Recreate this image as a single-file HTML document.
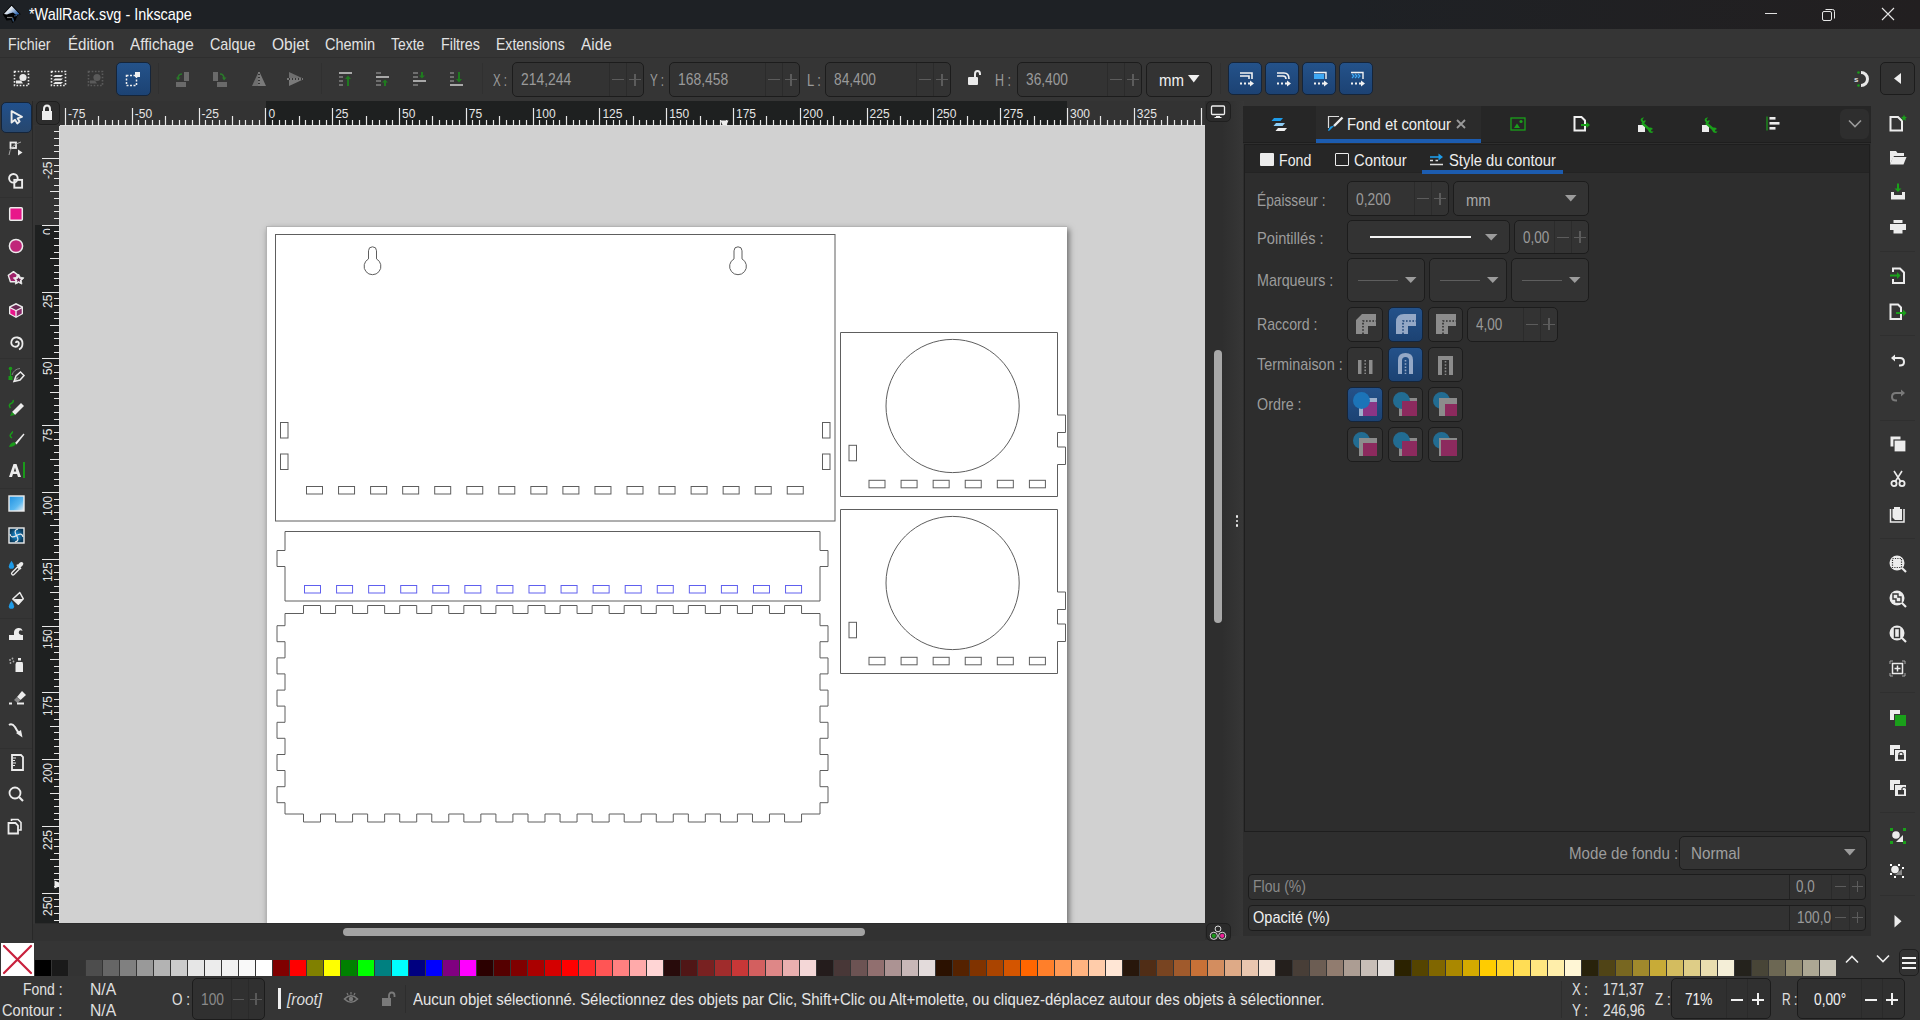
<!DOCTYPE html>
<html><head><meta charset="utf-8">
<style>
*{margin:0;padding:0;box-sizing:border-box}
html,body{width:1920px;height:1020px;overflow:hidden;background:#353535;font-family:"Liberation Sans",sans-serif;color:#e6e6e6;position:relative}
.a{position:absolute}
.t{position:absolute;white-space:nowrap;line-height:1}
.fld{position:absolute;border:1px solid #1c1c1c;border-radius:5px;background:#333}
.btnb{position:absolute;border:1px solid #15253a;border-radius:5px;background:linear-gradient(#24528a,#1c4273)}
</style></head><body>

<div class="a" style="left:0px;top:0px;width:1920px;height:29px;background:linear-gradient(90deg,#1e2125 0%,#1e2125 70%,#221f20 100%);"></div>
<svg class="a" style="left:0px;top:1px;" width="22" height="22" viewBox="0 0 22 22"><defs><linearGradient id="lgo" x1="0" y1="0" x2="1" y2="0.6"><stop offset="0.25" stop-color="#ffffff"/><stop offset="0.55" stop-color="#c8d4e4"/><stop offset="1" stop-color="#3a70b8"/></linearGradient></defs><path d="M11.6 3.5 L20.8 13.2 L17.5 14.5 L15.5 19.5 L12.5 22 L11 19 L6.5 19.5 L5 17 L2.8 13.3 Z" fill="#000"/><path d="M11.6 4.8 L19.6 13.2 L16 13.8 L13 11.5 L9.5 12.5 L7 13.5 L4 13 Z" fill="url(#lgo)"/><path d="M7 16.5 H12.5" stroke="#777" stroke-width="1.2"/><path d="M12.5 17 L13.5 20.5" stroke="#3a5a80" stroke-width="1.3"/><path d="M14 15 L17 14.5" stroke="#3a5a80" stroke-width="1"/></svg>
<div class="t" style="left:29.00px;top:7.21px;font-size:15.7px;color:#ffffff;transform:scaleX(0.9188);transform-origin:0 0;">*WallRack.svg - Inkscape</div>
<div class="a" style="left:1765px;top:13px;width:12px;height:1px;background:#e0e0e0;"></div>
<svg class="a" style="left:1821px;top:7px;" width="16" height="15" viewBox="0 0 16 15"><rect x="1.5" y="4.5" width="9" height="9" rx="1.5" fill="none" stroke="#e6e6e6" stroke-width="1"/><path d="M4.5 2.5 H11.5 Q13.5 2.5 13.5 4.5 V11.5" fill="none" stroke="#e6e6e6" stroke-width="1"/></svg>
<svg class="a" style="left:1881px;top:7px;" width="14" height="14" viewBox="0 0 14 14"><path d="M1 1 L13 13 M13 1 L1 13" stroke="#e6e6e6" stroke-width="1.1"/></svg>
<div class="a" style="left:0px;top:29px;width:1920px;height:28px;background:#353535;"></div>
<div class="a" style="left:0px;top:57px;width:1920px;height:1px;background:#2e2e2e;"></div>
<div class="t" style="left:8.30px;top:37.21px;font-size:15.7px;color:#e3e3e3;transform:scaleX(0.9022);transform-origin:0 0;">Fichier</div>
<div class="t" style="left:67.50px;top:37.21px;font-size:15.7px;color:#e3e3e3;transform:scaleX(0.9624);transform-origin:0 0;">Édition</div>
<div class="t" style="left:130.00px;top:37.21px;font-size:15.7px;color:#e3e3e3;transform:scaleX(0.9774);transform-origin:0 0;">Affichage</div>
<div class="t" style="left:210.00px;top:37.21px;font-size:15.7px;color:#e3e3e3;transform:scaleX(0.9146);transform-origin:0 0;">Calque</div>
<div class="t" style="left:272.00px;top:37.21px;font-size:15.7px;color:#e3e3e3;transform:scaleX(0.9914);transform-origin:0 0;">Objet</div>
<div class="t" style="left:325.00px;top:37.21px;font-size:15.7px;color:#e3e3e3;transform:scaleX(0.9243);transform-origin:0 0;">Chemin</div>
<div class="t" style="left:391.00px;top:37.21px;font-size:15.7px;color:#e3e3e3;transform:scaleX(0.8875);transform-origin:0 0;">Texte</div>
<div class="t" style="left:441.00px;top:37.21px;font-size:15.7px;color:#e3e3e3;transform:scaleX(0.9126);transform-origin:0 0;">Filtres</div>
<div class="t" style="left:496.30px;top:37.21px;font-size:15.7px;color:#e3e3e3;transform:scaleX(0.8946);transform-origin:0 0;">Extensions</div>
<div class="t" style="left:581.00px;top:37.21px;font-size:15.7px;color:#e3e3e3;transform:scaleX(0.9770);transform-origin:0 0;">Aide</div>
<div class="a" style="left:0px;top:58px;width:1920px;height:43px;background:#353535;"></div>
<svg class="a" style="left:13px;top:70px;" width="18" height="18" viewBox="0 0 18 18"><rect x="1.5" y="1.5" width="14" height="14" fill="none" stroke="#e8e8e8" stroke-width="1.6" stroke-dasharray="1.6 1.6"/><circle cx="10" cy="7.5" r="3.6" fill="#e8e8e8"/><path d="M3 13.5 V10.5 H8 L10 13.5 Z" fill="#e8e8e8"/></svg>
<svg class="a" style="left:50px;top:70px;" width="18" height="18" viewBox="0 0 18 18"><rect x="1.5" y="1.5" width="14" height="14" fill="none" stroke="#e8e8e8" stroke-width="1.6" stroke-dasharray="1.6 1.6"/><path d="M5 5 H13 L11 7 H3 Z M5 8.5 H13 L11 10.5 H3 Z M5 12 H13 L11 14 H3 Z" fill="#e8e8e8"/></svg>
<svg class="a" style="left:87px;top:70px;" width="18" height="18" viewBox="0 0 18 18"><rect x="1.5" y="1.5" width="14" height="14" fill="none" stroke="#5a5a5a" stroke-width="1.6" stroke-dasharray="1.6 1.6"/><circle cx="10" cy="7.5" r="3.6" fill="#5a5a5a"/><path d="M3 13.5 V10.5 H8 L10 13.5 Z" fill="#5a5a5a"/></svg>
<div class="btnb" style="left:116px;top:62px;width:35px;height:34px"></div>
<svg class="a" style="left:125px;top:71px;" width="16" height="16" viewBox="0 0 16 16"><rect x="1.5" y="4.5" width="10" height="10" fill="none" stroke="#eee" stroke-width="1.5" stroke-dasharray="2 1.5"/><rect x="10" y="1" width="5" height="5" fill="#f0f0f0"/></svg>
<div class="a" style="left:158px;top:63px;width:1px;height:31px;background:#303030;"></div>
<svg class="a" style="left:175px;top:71px;" width="18" height="17" viewBox="0 0 18 17"><rect x="9" y="1" width="5" height="9" fill="#6a6a6a"/><rect x="1" y="11" width="10" height="5" fill="#6a6a6a"/><path d="M7 3 Q3 3 3 8" stroke="#2a7a2a" stroke-width="1.6" fill="none"/><path d="M1 6.5 L3 9.5 L5.5 6.5Z" fill="#2a7a2a"/></svg>
<svg class="a" style="left:212px;top:71px;" width="18" height="17" viewBox="0 0 18 17"><rect x="1" y="1" width="5" height="9" fill="#6a6a6a"/><rect x="5" y="11" width="10" height="5" fill="#6a6a6a"/><path d="M8 3 Q12 3 12 8" stroke="#2a7a2a" stroke-width="1.6" fill="none"/><path d="M10 6.5 L12 9.5 L14.5 6.5Z" fill="#2a7a2a"/></svg>
<svg class="a" style="left:251px;top:71px;" width="16" height="16" viewBox="0 0 16 16"><path d="M7 2 V15 H1 Z" fill="#6e6e6e"/><path d="M9 2 V15 H15 Z" fill="#7a7a7a"/><path d="M8 1 V16" stroke="#bbb" stroke-width="1" stroke-dasharray="2 1"/></svg>
<svg class="a" style="left:287px;top:71px;" width="16" height="16" viewBox="0 0 16 16"><path d="M2 1 L15 7 H2 Z" fill="#6e6e6e"/><path d="M2 9 H15 L2 15 Z" fill="#7a7a7a"/><path d="M0 8 H16" stroke="#bbb" stroke-width="1" stroke-dasharray="2 1"/></svg>
<div class="a" style="left:321px;top:63px;width:1px;height:31px;background:#303030;"></div>
<svg class="a" style="left:338px;top:71px;" width="16" height="16" viewBox="0 0 16 16"><rect x="1" y="1" width="13" height="2" fill="#a8a8a8"/><rect x="1" y="5" width="4" height="2" fill="#6e6e6e"/><rect x="1" y="9" width="4" height="2" fill="#6e6e6e"/><rect x="1" y="13" width="4" height="2" fill="#6e6e6e"/><path d="M10 15 V7" stroke="#1f7a1f" stroke-width="2"/><path d="M7 8 L10 4.5 L13 8Z" fill="#1f7a1f"/></svg>
<svg class="a" style="left:375px;top:71px;" width="16" height="16" viewBox="0 0 16 16"><rect x="1" y="1" width="5" height="2" fill="#6e6e6e"/><rect x="1" y="5" width="13" height="2" fill="#a8a8a8"/><rect x="1" y="9" width="5" height="2" fill="#6e6e6e"/><rect x="1" y="13" width="5" height="2" fill="#6e6e6e"/><path d="M10 15 V11" stroke="#1f7a1f" stroke-width="2"/><path d="M7 11.5 L10 8.5 L13 11.5Z" fill="#1f7a1f"/></svg>
<svg class="a" style="left:412px;top:71px;" width="16" height="16" viewBox="0 0 16 16"><rect x="1" y="1" width="5" height="2" fill="#6e6e6e"/><rect x="1" y="5" width="5" height="2" fill="#6e6e6e"/><rect x="1" y="9" width="13" height="2" fill="#a8a8a8"/><rect x="1" y="13" width="5" height="2" fill="#6e6e6e"/><path d="M10 1 V5" stroke="#1f7a1f" stroke-width="2"/><path d="M7 4.5 L10 7.5 L13 4.5Z" fill="#1f7a1f"/></svg>
<svg class="a" style="left:449px;top:71px;" width="16" height="16" viewBox="0 0 16 16"><rect x="1" y="1" width="4" height="2" fill="#6e6e6e"/><rect x="1" y="5" width="4" height="2" fill="#6e6e6e"/><rect x="1" y="9" width="4" height="2" fill="#6e6e6e"/><rect x="1" y="13" width="13" height="2" fill="#a8a8a8"/><path d="M10 1 V9" stroke="#1f7a1f" stroke-width="2"/><path d="M7 8 L10 11.5 L13 8Z" fill="#1f7a1f"/></svg>
<div class="a" style="left:482px;top:63px;width:1px;height:31px;background:#303030;"></div>
<div class="t" style="left:493.00px;top:72.71px;font-size:15.7px;color:#9a9a9a;transform:scaleX(0.7293);transform-origin:0 0;">X :</div>
<div class="fld" style="left:512px;top:62px;width:132px;height:35px"></div>
<div class="t" style="left:520.50px;top:72.21px;font-size:15.7px;color:#9a9a9a;transform:scaleX(0.8864);transform-origin:0 0;">214,244</div>
<div class="a" style="left:609px;top:63px;width:1px;height:33px;background:#2b2b2b;"></div>
<div class="a" style="left:626px;top:63px;width:1px;height:33px;background:#2b2b2b;"></div>
<div class="a" style="left:612px;top:79.0px;width:12px;height:1.3px;background:#5c5c5c;"></div>
<div class="a" style="left:629px;top:79.0px;width:12px;height:1.3px;background:#5c5c5c;"></div>
<div class="a" style="left:634.4px;top:73.5px;width:1.3px;height:12px;background:#5c5c5c;"></div>
<div class="t" style="left:650.00px;top:72.71px;font-size:15.7px;color:#9a9a9a;transform:scaleX(0.7403);transform-origin:0 0;">Y :</div>
<div class="fld" style="left:669px;top:62px;width:131px;height:35px"></div>
<div class="t" style="left:677.50px;top:72.21px;font-size:15.7px;color:#9a9a9a;transform:scaleX(0.8864);transform-origin:0 0;">168,458</div>
<div class="a" style="left:765px;top:63px;width:1px;height:33px;background:#2b2b2b;"></div>
<div class="a" style="left:782px;top:63px;width:1px;height:33px;background:#2b2b2b;"></div>
<div class="a" style="left:768px;top:79.0px;width:12px;height:1.3px;background:#5c5c5c;"></div>
<div class="a" style="left:785px;top:79.0px;width:12px;height:1.3px;background:#5c5c5c;"></div>
<div class="a" style="left:790.4px;top:73.5px;width:1.3px;height:12px;background:#5c5c5c;"></div>
<div class="t" style="left:807.00px;top:72.71px;font-size:15.7px;color:#9a9a9a;transform:scaleX(0.8297);transform-origin:0 0;">L :</div>
<div class="fld" style="left:825px;top:62px;width:126px;height:35px"></div>
<div class="t" style="left:833.50px;top:72.21px;font-size:15.7px;color:#9a9a9a;transform:scaleX(0.8747);transform-origin:0 0;">84,400</div>
<div class="a" style="left:916px;top:63px;width:1px;height:33px;background:#2b2b2b;"></div>
<div class="a" style="left:933px;top:63px;width:1px;height:33px;background:#2b2b2b;"></div>
<div class="a" style="left:919px;top:79.0px;width:12px;height:1.3px;background:#5c5c5c;"></div>
<div class="a" style="left:936px;top:79.0px;width:12px;height:1.3px;background:#5c5c5c;"></div>
<div class="a" style="left:941.4px;top:73.5px;width:1.3px;height:12px;background:#5c5c5c;"></div>
<svg class="a" style="left:966px;top:69px;" width="16" height="18" viewBox="0 0 16 18"><rect x="2" y="8" width="10" height="8" rx="1" fill="#eaeaea"/><path d="M9 8 V5 Q9 2 11.5 2 Q14 2 14 5 V6" stroke="#eaeaea" stroke-width="2" fill="none"/></svg>
<div class="t" style="left:995.00px;top:72.71px;font-size:15.7px;color:#9a9a9a;transform:scaleX(0.7975);transform-origin:0 0;">H :</div>
<div class="fld" style="left:1017px;top:62px;width:125px;height:35px"></div>
<div class="t" style="left:1025.50px;top:72.21px;font-size:15.7px;color:#9a9a9a;transform:scaleX(0.8747);transform-origin:0 0;">36,400</div>
<div class="a" style="left:1107px;top:63px;width:1px;height:33px;background:#2b2b2b;"></div>
<div class="a" style="left:1124px;top:63px;width:1px;height:33px;background:#2b2b2b;"></div>
<div class="a" style="left:1110px;top:79.0px;width:12px;height:1.3px;background:#5c5c5c;"></div>
<div class="a" style="left:1127px;top:79.0px;width:12px;height:1.3px;background:#5c5c5c;"></div>
<div class="a" style="left:1132.4px;top:73.5px;width:1.3px;height:12px;background:#5c5c5c;"></div>
<div class="fld" style="left:1146px;top:62px;width:66px;height:35px"></div>
<div class="t" style="left:1158.70px;top:73.21px;font-size:15.7px;color:#f0f0f0;transform:scaleX(0.9558);transform-origin:0 0;">mm</div>
<svg class="a" style="left:1188px;top:75px;" width="12" height="8" viewBox="0 0 12 8"><path d="M0 0 H11.5 L5.75 7.5Z" fill="#f0f0f0"/></svg>
<div class="a" style="left:1220px;top:63px;width:1px;height:31px;background:#303030;"></div>
<div class="btnb" style="left:1228px;top:62px;width:34px;height:33px"></div>
<svg class="a" style="left:1239px;top:71px;" width="16" height="17" viewBox="0 0 16 17"><path d="M1 2 H13 V8 M1 5 H10 V8" stroke="#f2f2f2" stroke-width="1.6" fill="none"/><path d="M1 12.5 H3 M5 12.5 H7 M9 12.5 H12" stroke="#f2f2f2" stroke-width="2"/><path d="M11 9.5 L15 12.5 L11 15.5Z" fill="#f2f2f2"/></svg>
<div class="btnb" style="left:1265px;top:62px;width:34px;height:33px"></div>
<svg class="a" style="left:1276px;top:71px;" width="16" height="17" viewBox="0 0 16 17"><path d="M1 2 H8 Q13 2 13 8 M1 5 H7 Q10 5 10 8" stroke="#f2f2f2" stroke-width="1.6" fill="none"/><path d="M1 12.5 H3 M5 12.5 H7 M9 12.5 H12" stroke="#f2f2f2" stroke-width="2"/><path d="M11 9.5 L15 12.5 L11 15.5Z" fill="#f2f2f2"/></svg>
<div class="btnb" style="left:1302px;top:62px;width:34px;height:33px"></div>
<svg class="a" style="left:1313px;top:71px;" width="16" height="17" viewBox="0 0 16 17"><rect x="1" y="3" width="10" height="5" fill="#3fa9f5"/><path d="M1 1.5 H13 V8" stroke="#f2f2f2" stroke-width="1.4" fill="none"/><path d="M1 12.5 H3 M5 12.5 H7 M9 12.5 H12" stroke="#f2f2f2" stroke-width="2"/><path d="M11 9.5 L15 12.5 L11 15.5Z" fill="#f2f2f2"/></svg>
<div class="btnb" style="left:1339px;top:62px;width:34px;height:33px"></div>
<svg class="a" style="left:1350px;top:71px;" width="16" height="17" viewBox="0 0 16 17"><path d="M2 3 L4 5 L2 7 M5 3 L7 5 L5 7 M8 3 L10 5 L8 7" stroke="#3fa9f5" stroke-width="1.2" fill="none"/><path d="M1 1.5 H13 V8" stroke="#f2f2f2" stroke-width="1.4" fill="none"/><path d="M1 12.5 H3 M5 12.5 H7 M9 12.5 H12" stroke="#f2f2f2" stroke-width="2"/><path d="M11 9.5 L15 12.5 L11 15.5Z" fill="#f2f2f2"/></svg>
<svg class="a" style="left:1851px;top:70px;" width="20" height="18" viewBox="0 0 20 18"><path d="M10 2.5 A6.5 6.5 0 0 1 10 15.5" stroke="#e8e8e8" stroke-width="3" fill="none"/><circle cx="7.5" cy="2.5" r="1.3" fill="#1a9e1a"/><circle cx="7.5" cy="15.5" r="1.3" fill="#1a9e1a"/><text x="3" y="12" font-size="8" fill="#ddd" font-family="Liberation Sans" font-weight="bold">s</text></svg>
<div class="fld" style="left:1880px;top:62px;width:35px;height:33px;background:#323232"></div>
<svg class="a" style="left:1894px;top:73px;" width="8" height="12" viewBox="0 0 8 12"><path d="M7 0 V11 L0 5.5Z" fill="#eee"/></svg>
<div class="a" style="left:0px;top:101px;width:32px;height:839px;background:#353535;"></div>
<div class="a" style="left:32px;top:101px;width:1px;height:839px;background:#282828;"></div>
<div class="a" style="left:33px;top:101px;width:1172px;height:24px;background:#333333;"></div>
<div class="a" style="left:265.9px;top:101px;width:801.6px;height:24px;background:#1e2020;"></div>
<div class="a" style="left:60px;top:125px;width:1145px;height:1px;background:#dcdcdc;"></div>
<div class="a" style="left:36px;top:101px;width:24px;height:24px;border:1px solid #1f1f1f;border-radius:5px;background:#2d2d2d"></div>
<svg class="a" style="left:41px;top:104px;" width="12" height="17" viewBox="0 0 12 17"><rect x="1" y="7" width="10" height="9" fill="#ededed"/><path d="M3 7.5 V5 Q3 1.5 6 1.5 Q9 1.5 9 5 V7.5" stroke="#ededed" stroke-width="2" fill="none"/></svg>
<svg class="a" style="left:60px;top:101px;" width="1145" height="25" viewBox="0 0 1145 25"><path d="M5.5 7 V125 M12.5 19 V125 M18.5 19 V125 M25.5 19 V125 M32.5 19 V125 M38.5 15 V125 M45.5 19 V125 M52.5 19 V125 M58.5 19 V125 M65.5 19 V125 M72.5 7 V125 M78.5 19 V125 M85.5 19 V125 M92.5 19 V125 M99.5 19 V125 M105.5 15 V125 M112.5 19 V125 M119.5 19 V125 M125.5 19 V125 M132.5 19 V125 M139.5 7 V125 M145.5 19 V125 M152.5 19 V125 M159.5 19 V125 M165.5 19 V125 M172.5 15 V125 M179.5 19 V125 M185.5 19 V125 M192.5 19 V125 M199.5 19 V125 M205.5 7 V125 M212.5 19 V125 M219.5 19 V125 M225.5 19 V125 M232.5 19 V125 M239.5 15 V125 M245.5 19 V125 M252.5 19 V125 M259.5 19 V125 M266.5 19 V125 M272.5 7 V125 M279.5 19 V125 M286.5 19 V125 M292.5 19 V125 M299.5 19 V125 M306.5 15 V125 M312.5 19 V125 M319.5 19 V125 M326.5 19 V125 M332.5 19 V125 M339.5 7 V125 M346.5 19 V125 M352.5 19 V125 M359.5 19 V125 M366.5 19 V125 M372.5 15 V125 M379.5 19 V125 M386.5 19 V125 M392.5 19 V125 M399.5 19 V125 M406.5 7 V125 M412.5 19 V125 M419.5 19 V125 M426.5 19 V125 M433.5 19 V125 M439.5 15 V125 M446.5 19 V125 M453.5 19 V125 M459.5 19 V125 M466.5 19 V125 M473.5 7 V125 M479.5 19 V125 M486.5 19 V125 M493.5 19 V125 M499.5 19 V125 M506.5 15 V125 M513.5 19 V125 M519.5 19 V125 M526.5 19 V125 M533.5 19 V125 M539.5 7 V125 M546.5 19 V125 M553.5 19 V125 M559.5 19 V125 M566.5 19 V125 M573.5 15 V125 M579.5 19 V125 M586.5 19 V125 M593.5 19 V125 M600.5 19 V125 M606.5 7 V125 M613.5 19 V125 M620.5 19 V125 M626.5 19 V125 M633.5 19 V125 M640.5 15 V125 M646.5 19 V125 M653.5 19 V125 M660.5 19 V125 M666.5 19 V125 M673.5 7 V125 M680.5 19 V125 M686.5 19 V125 M693.5 19 V125 M700.5 19 V125 M706.5 15 V125 M713.5 19 V125 M720.5 19 V125 M726.5 19 V125 M733.5 19 V125 M740.5 7 V125 M746.5 19 V125 M753.5 19 V125 M760.5 19 V125 M767.5 19 V125 M773.5 15 V125 M780.5 19 V125 M787.5 19 V125 M793.5 19 V125 M800.5 19 V125 M807.5 7 V125 M813.5 19 V125 M820.5 19 V125 M827.5 19 V125 M833.5 19 V125 M840.5 15 V125 M847.5 19 V125 M853.5 19 V125 M860.5 19 V125 M867.5 19 V125 M873.5 7 V125 M880.5 19 V125 M887.5 19 V125 M893.5 19 V125 M900.5 19 V125 M907.5 15 V125 M913.5 19 V125 M920.5 19 V125 M927.5 19 V125 M934.5 19 V125 M940.5 7 V125 M947.5 19 V125 M954.5 19 V125 M960.5 19 V125 M967.5 19 V125 M974.5 15 V125 M980.5 19 V125 M987.5 19 V125 M994.5 19 V125 M1000.5 19 V125 M1007.5 7 V125 M1014.5 19 V125 M1020.5 19 V125 M1027.5 19 V125 M1034.5 19 V125 M1040.5 15 V125 M1047.5 19 V125 M1054.5 19 V125 M1060.5 19 V125 M1067.5 19 V125 M1074.5 7 V125 M1080.5 19 V125 M1087.5 19 V125 M1094.5 19 V125 M1101.5 19 V125 M1107.5 15 V125 M1114.5 19 V125 M1121.5 19 V125 M1127.5 19 V125 M1134.5 19 V125 M1141.5 7 V125" stroke="#e8e8e8" stroke-width="1.2" fill="none"/></svg>
<div class="t" style="left:68.00px;top:108.34px;font-size:12px;color:#e6e6e6;">-75</div>
<div class="t" style="left:134.80px;top:108.34px;font-size:12px;color:#e6e6e6;">-50</div>
<div class="t" style="left:201.60px;top:108.34px;font-size:12px;color:#e6e6e6;">-25</div>
<div class="t" style="left:268.40px;top:108.34px;font-size:12px;color:#e6e6e6;">0</div>
<div class="t" style="left:335.20px;top:108.34px;font-size:12px;color:#e6e6e6;">25</div>
<div class="t" style="left:402.00px;top:108.34px;font-size:12px;color:#e6e6e6;">50</div>
<div class="t" style="left:468.80px;top:108.34px;font-size:12px;color:#e6e6e6;">75</div>
<div class="t" style="left:535.60px;top:108.34px;font-size:12px;color:#e6e6e6;">100</div>
<div class="t" style="left:602.40px;top:108.34px;font-size:12px;color:#e6e6e6;">125</div>
<div class="t" style="left:669.20px;top:108.34px;font-size:12px;color:#e6e6e6;">150</div>
<div class="t" style="left:736.00px;top:108.34px;font-size:12px;color:#e6e6e6;">175</div>
<div class="t" style="left:802.80px;top:108.34px;font-size:12px;color:#e6e6e6;">200</div>
<div class="t" style="left:869.60px;top:108.34px;font-size:12px;color:#e6e6e6;">225</div>
<div class="t" style="left:936.40px;top:108.34px;font-size:12px;color:#e6e6e6;">250</div>
<div class="t" style="left:1003.20px;top:108.34px;font-size:12px;color:#e6e6e6;">275</div>
<div class="t" style="left:1070.00px;top:108.34px;font-size:12px;color:#e6e6e6;">300</div>
<div class="t" style="left:1136.80px;top:108.34px;font-size:12px;color:#e6e6e6;">325</div>
<div class="a" style="left:35px;top:126px;width:24px;height:797px;background:#333333;"></div>
<div class="a" style="left:35px;top:225.3px;width:24px;height:697.7px;background:#1e2020;"></div>
<div class="a" style="left:59px;top:126px;width:1px;height:797px;background:#dcdcdc;"></div>
<svg class="a" style="left:35px;top:126px;" width="25" height="797" viewBox="0 0 25 797"><path d="M19 5.5 H24 M19 12.5 H24 M19 19.5 H24 M19 25.5 H24 M7 32.5 H24 M19 39.5 H24 M19 45.5 H24 M19 52.5 H24 M19 59.5 H24 M15 65.5 H24 M19 72.5 H24 M19 79.5 H24 M19 85.5 H24 M19 92.5 H24 M7 99.5 H24 M19 105.5 H24 M19 112.5 H24 M19 119.5 H24 M19 126.5 H24 M15 132.5 H24 M19 139.5 H24 M19 146.5 H24 M19 152.5 H24 M19 159.5 H24 M7 166.5 H24 M19 172.5 H24 M19 179.5 H24 M19 186.5 H24 M19 192.5 H24 M15 199.5 H24 M19 206.5 H24 M19 212.5 H24 M19 219.5 H24 M19 226.5 H24 M7 232.5 H24 M19 239.5 H24 M19 246.5 H24 M19 252.5 H24 M19 259.5 H24 M15 266.5 H24 M19 272.5 H24 M19 279.5 H24 M19 286.5 H24 M19 293.5 H24 M7 299.5 H24 M19 306.5 H24 M19 313.5 H24 M19 319.5 H24 M19 326.5 H24 M15 333.5 H24 M19 339.5 H24 M19 346.5 H24 M19 353.5 H24 M19 359.5 H24 M7 366.5 H24 M19 373.5 H24 M19 379.5 H24 M19 386.5 H24 M19 393.5 H24 M15 399.5 H24 M19 406.5 H24 M19 413.5 H24 M19 419.5 H24 M19 426.5 H24 M7 433.5 H24 M19 439.5 H24 M19 446.5 H24 M19 453.5 H24 M19 460.5 H24 M15 466.5 H24 M19 473.5 H24 M19 480.5 H24 M19 486.5 H24 M19 493.5 H24 M7 500.5 H24 M19 506.5 H24 M19 513.5 H24 M19 520.5 H24 M19 526.5 H24 M15 533.5 H24 M19 540.5 H24 M19 546.5 H24 M19 553.5 H24 M19 560.5 H24 M7 566.5 H24 M19 573.5 H24 M19 580.5 H24 M19 586.5 H24 M19 593.5 H24 M15 600.5 H24 M19 606.5 H24 M19 613.5 H24 M19 620.5 H24 M19 627.5 H24 M7 633.5 H24 M19 640.5 H24 M19 647.5 H24 M19 653.5 H24 M19 660.5 H24 M15 667.5 H24 M19 673.5 H24 M19 680.5 H24 M19 687.5 H24 M19 693.5 H24 M7 700.5 H24 M19 707.5 H24 M19 713.5 H24 M19 720.5 H24 M19 727.5 H24 M15 733.5 H24 M19 740.5 H24 M19 747.5 H24 M19 753.5 H24 M19 760.5 H24 M7 767.5 H24 M19 773.5 H24 M19 780.5 H24 M19 787.5 H24 M19 794.5 H24" stroke="#e8e8e8" stroke-width="1.2" fill="none"/></svg>
<div class="t" style="left:41.50px;top:178.84px;font-size:12px;color:#e6e6e6;transform:rotate(-90deg);transform-origin:0 0">-25</div>
<div class="t" style="left:41.50px;top:234.97px;font-size:12px;color:#e6e6e6;transform:rotate(-90deg);transform-origin:0 0">0</div>
<div class="a" style="left:50.3px;top:227.3px;width:3px;height:8px;background:#1e2020;"></div>
<div class="t" style="left:41.50px;top:308.45px;font-size:12px;color:#e6e6e6;transform:rotate(-90deg);transform-origin:0 0">25</div>
<div class="t" style="left:41.50px;top:375.25px;font-size:12px;color:#e6e6e6;transform:rotate(-90deg);transform-origin:0 0">50</div>
<div class="t" style="left:41.50px;top:442.05px;font-size:12px;color:#e6e6e6;transform:rotate(-90deg);transform-origin:0 0">75</div>
<div class="t" style="left:41.50px;top:515.52px;font-size:12px;color:#e6e6e6;transform:rotate(-90deg);transform-origin:0 0">100</div>
<div class="a" style="left:40px;top:493.7px;width:13px;height:2.3px;background:#1e2020;"></div>
<div class="t" style="left:41.50px;top:582.32px;font-size:12px;color:#e6e6e6;transform:rotate(-90deg);transform-origin:0 0">125</div>
<div class="a" style="left:40px;top:560.5px;width:13px;height:2.3px;background:#1e2020;"></div>
<div class="t" style="left:41.50px;top:649.12px;font-size:12px;color:#e6e6e6;transform:rotate(-90deg);transform-origin:0 0">150</div>
<div class="a" style="left:40px;top:627.3000000000001px;width:13px;height:2.3px;background:#1e2020;"></div>
<div class="t" style="left:41.50px;top:715.92px;font-size:12px;color:#e6e6e6;transform:rotate(-90deg);transform-origin:0 0">175</div>
<div class="a" style="left:40px;top:694.1000000000001px;width:13px;height:2.3px;background:#1e2020;"></div>
<div class="t" style="left:41.50px;top:782.72px;font-size:12px;color:#e6e6e6;transform:rotate(-90deg);transform-origin:0 0">200</div>
<div class="a" style="left:40px;top:760.9000000000001px;width:13px;height:2.3px;background:#1e2020;"></div>
<div class="t" style="left:41.50px;top:849.52px;font-size:12px;color:#e6e6e6;transform:rotate(-90deg);transform-origin:0 0">225</div>
<div class="a" style="left:40px;top:827.7px;width:13px;height:2.3px;background:#1e2020;"></div>
<div class="t" style="left:41.50px;top:916.32px;font-size:12px;color:#e6e6e6;transform:rotate(-90deg);transform-origin:0 0">250</div>
<div class="a" style="left:40px;top:894.5px;width:13px;height:2.3px;background:#1e2020;"></div>
<div class="a" style="left:60px;top:126px;width:1145px;height:797px;background:#d1d1d1;"></div>
<div class="a" style="left:266px;top:226px;width:801px;height:697px;background:#fff;border-top:1px solid #b4b4b4;border-left:1px solid #b4b4b4;box-shadow:2px 3px 6px rgba(0,0,0,0.5)"></div>
<div class="a" style="left:1205px;top:126px;width:1px;height:1px;background:#2e2e2e;"></div>
<svg class="a" style="left:0;top:0" width="1920" height="1020" viewBox="0 0 1920 1020"><defs><clipPath id="cv"><rect x="60" y="126" width="1145" height="797"/></clipPath></defs><g clip-path="url(#cv)"><rect x="275.5" y="234.5" width="559.5" height="286.5" stroke="#5e5e5e" stroke-width="1" fill="none"/><path d="M368.50 250.80 L368.50 258.91 A8.4 8.4 0 1 0 376.50 258.91 L376.50 250.80 A4.0 4.0 0 0 0 368.50 250.80 Z" stroke="#5e5e5e" stroke-width="1" fill="none"/><path d="M734.00 250.80 L734.00 258.91 A8.4 8.4 0 1 0 742.00 258.91 L742.00 250.80 A4.0 4.0 0 0 0 734.00 250.80 Z" stroke="#5e5e5e" stroke-width="1" fill="none"/><rect x="280.5" y="422.5" width="7.5" height="15.5" stroke="#5e5e5e" stroke-width="1" fill="none"/><rect x="280.5" y="454" width="7.5" height="15.5" stroke="#5e5e5e" stroke-width="1" fill="none"/><rect x="822.5" y="422.5" width="7.5" height="15.5" stroke="#5e5e5e" stroke-width="1" fill="none"/><rect x="822.5" y="454" width="7.5" height="15.5" stroke="#5e5e5e" stroke-width="1" fill="none"/><rect x="306.50" y="486.5" width="16" height="7.5" stroke="#5e5e5e" stroke-width="1" fill="none"/><rect x="338.55" y="486.5" width="16" height="7.5" stroke="#5e5e5e" stroke-width="1" fill="none"/><rect x="370.60" y="486.5" width="16" height="7.5" stroke="#5e5e5e" stroke-width="1" fill="none"/><rect x="402.65" y="486.5" width="16" height="7.5" stroke="#5e5e5e" stroke-width="1" fill="none"/><rect x="434.70" y="486.5" width="16" height="7.5" stroke="#5e5e5e" stroke-width="1" fill="none"/><rect x="466.75" y="486.5" width="16" height="7.5" stroke="#5e5e5e" stroke-width="1" fill="none"/><rect x="498.80" y="486.5" width="16" height="7.5" stroke="#5e5e5e" stroke-width="1" fill="none"/><rect x="530.85" y="486.5" width="16" height="7.5" stroke="#5e5e5e" stroke-width="1" fill="none"/><rect x="562.90" y="486.5" width="16" height="7.5" stroke="#5e5e5e" stroke-width="1" fill="none"/><rect x="594.95" y="486.5" width="16" height="7.5" stroke="#5e5e5e" stroke-width="1" fill="none"/><rect x="627.00" y="486.5" width="16" height="7.5" stroke="#5e5e5e" stroke-width="1" fill="none"/><rect x="659.05" y="486.5" width="16" height="7.5" stroke="#5e5e5e" stroke-width="1" fill="none"/><rect x="691.10" y="486.5" width="16" height="7.5" stroke="#5e5e5e" stroke-width="1" fill="none"/><rect x="723.15" y="486.5" width="16" height="7.5" stroke="#5e5e5e" stroke-width="1" fill="none"/><rect x="755.20" y="486.5" width="16" height="7.5" stroke="#5e5e5e" stroke-width="1" fill="none"/><rect x="787.25" y="486.5" width="16" height="7.5" stroke="#5e5e5e" stroke-width="1" fill="none"/><path d="M285 531.5 H820 V550.5 H828 V566.5 H820 V601 H285 V566.5 H277 V550.5 H285 Z" stroke="#5e5e5e" stroke-width="1" fill="none"/><rect x="304.50" y="585.5" width="16" height="7.5" stroke="#6060ee" stroke-width="1" fill="none"/><rect x="336.57" y="585.5" width="16" height="7.5" stroke="#6060ee" stroke-width="1" fill="none"/><rect x="368.64" y="585.5" width="16" height="7.5" stroke="#6060ee" stroke-width="1" fill="none"/><rect x="400.71" y="585.5" width="16" height="7.5" stroke="#6060ee" stroke-width="1" fill="none"/><rect x="432.78" y="585.5" width="16" height="7.5" stroke="#6060ee" stroke-width="1" fill="none"/><rect x="464.85" y="585.5" width="16" height="7.5" stroke="#6060ee" stroke-width="1" fill="none"/><rect x="496.92" y="585.5" width="16" height="7.5" stroke="#6060ee" stroke-width="1" fill="none"/><rect x="528.99" y="585.5" width="16" height="7.5" stroke="#6060ee" stroke-width="1" fill="none"/><rect x="561.06" y="585.5" width="16" height="7.5" stroke="#6060ee" stroke-width="1" fill="none"/><rect x="593.13" y="585.5" width="16" height="7.5" stroke="#6060ee" stroke-width="1" fill="none"/><rect x="625.20" y="585.5" width="16" height="7.5" stroke="#6060ee" stroke-width="1" fill="none"/><rect x="657.27" y="585.5" width="16" height="7.5" stroke="#6060ee" stroke-width="1" fill="none"/><rect x="689.34" y="585.5" width="16" height="7.5" stroke="#6060ee" stroke-width="1" fill="none"/><rect x="721.41" y="585.5" width="16" height="7.5" stroke="#6060ee" stroke-width="1" fill="none"/><rect x="753.48" y="585.5" width="16" height="7.5" stroke="#6060ee" stroke-width="1" fill="none"/><rect x="785.55" y="585.5" width="16" height="7.5" stroke="#6060ee" stroke-width="1" fill="none"/><path d="M285 613.5 H303.50 V605.5 H320.50 V613.5 H335.57 V605.5 H352.57 V613.5 H367.64 V605.5 H384.64 V613.5 H399.71 V605.5 H416.71 V613.5 H431.78 V605.5 H448.78 V613.5 H463.85 V605.5 H480.85 V613.5 H495.92 V605.5 H512.92 V613.5 H527.99 V605.5 H544.99 V613.5 H560.06 V605.5 H577.06 V613.5 H592.13 V605.5 H609.13 V613.5 H624.20 V605.5 H641.20 V613.5 H656.27 V605.5 H673.27 V613.5 H688.34 V605.5 H705.34 V613.5 H720.41 V605.5 H737.41 V613.5 H752.48 V605.5 H769.48 V613.5 H784.55 V605.5 H801.55 V613.5 H820 V625.70 H828 V641.70 H820 V657.90 H828 V673.90 H820 V690.10 H828 V706.10 H820 V722.30 H828 V738.30 H820 V754.50 H828 V770.50 H820 V786.70 H828 V802.70 H820 V814 H801.55 V822 H784.55 V814 H769.48 V822 H752.48 V814 H737.41 V822 H720.41 V814 H705.34 V822 H688.34 V814 H673.27 V822 H656.27 V814 H641.20 V822 H624.20 V814 H609.13 V822 H592.13 V814 H577.06 V822 H560.06 V814 H544.99 V822 H527.99 V814 H512.92 V822 H495.92 V814 H480.85 V822 H463.85 V814 H448.78 V822 H431.78 V814 H416.71 V822 H399.71 V814 H384.64 V822 H367.64 V814 H352.57 V822 H335.57 V814 H320.50 V822 H303.50 V814 H285 V802.70 H277 V786.70 H285 V770.50 H277 V754.50 H285 V738.30 H277 V722.30 H285 V706.10 H277 V690.10 H285 V673.90 H277 V657.90 H285 V641.70 H277 V625.70 H285 Z" stroke="#5e5e5e" stroke-width="1" fill="none"/><path d="M840.5 332.5 H1057.5 V415 H1065.5 V432.5 H1057.5 V447 H1065.5 V464.5 H1057.5 V496.5 H840.5 Z" stroke="#5e5e5e" stroke-width="1" fill="none"/><circle cx="952.6" cy="406" r="66.6" stroke="#5e5e5e" stroke-width="1" fill="none"/><rect x="849" y="445.3" width="7.5" height="15.5" stroke="#5e5e5e" stroke-width="1" fill="none"/><rect x="869.00" y="480.3" width="16" height="7.5" stroke="#5e5e5e" stroke-width="1" fill="none"/><rect x="901.08" y="480.3" width="16" height="7.5" stroke="#5e5e5e" stroke-width="1" fill="none"/><rect x="933.16" y="480.3" width="16" height="7.5" stroke="#5e5e5e" stroke-width="1" fill="none"/><rect x="965.24" y="480.3" width="16" height="7.5" stroke="#5e5e5e" stroke-width="1" fill="none"/><rect x="997.32" y="480.3" width="16" height="7.5" stroke="#5e5e5e" stroke-width="1" fill="none"/><rect x="1029.40" y="480.3" width="16" height="7.5" stroke="#5e5e5e" stroke-width="1" fill="none"/><path d="M840.5 509.5 H1057.5 V592 H1065.5 V609.5 H1057.5 V624 H1065.5 V641.5 H1057.5 V673.5 H840.5 Z" stroke="#5e5e5e" stroke-width="1" fill="none"/><circle cx="952.6" cy="583" r="66.6" stroke="#5e5e5e" stroke-width="1" fill="none"/><rect x="849" y="622.3" width="7.5" height="15.5" stroke="#5e5e5e" stroke-width="1" fill="none"/><rect x="869.00" y="657.3" width="16" height="7.5" stroke="#5e5e5e" stroke-width="1" fill="none"/><rect x="901.08" y="657.3" width="16" height="7.5" stroke="#5e5e5e" stroke-width="1" fill="none"/><rect x="933.16" y="657.3" width="16" height="7.5" stroke="#5e5e5e" stroke-width="1" fill="none"/><rect x="965.24" y="657.3" width="16" height="7.5" stroke="#5e5e5e" stroke-width="1" fill="none"/><rect x="997.32" y="657.3" width="16" height="7.5" stroke="#5e5e5e" stroke-width="1" fill="none"/><rect x="1029.40" y="657.3" width="16" height="7.5" stroke="#5e5e5e" stroke-width="1" fill="none"/></g></svg>
<div class="a" style="left:1205px;top:101px;width:26px;height:839px;background:#2e2e2e;"></div>
<div class="a" style="left:35px;top:923px;width:1170px;height:1px;background:#2c2c2c;"></div>
<div class="a" style="left:33px;top:924px;width:1172px;height:17px;background:#323232;"></div>
<svg class="a" style="left:720px;top:120px;" width="9" height="6" viewBox="0 0 9 6"><path d="M0.5 0.5 H8.5 L6.5 5 H2.5Z" fill="#eee"/></svg>
<svg class="a" style="left:54px;top:880px;" width="6" height="9" viewBox="0 0 6 9"><path d="M0.5 0.5 V8.5 L5 6.5 V2.5Z" fill="#eee"/></svg>
<div class="a" style="left:343px;top:928px;width:522px;height:8px;background:#a3a3a3;border-radius:4px"></div>
<div class="a" style="left:1214px;top:350px;width:8px;height:273px;background:#a8a8a8;border-radius:4px"></div>
<div class="a" style="left:1222px;top:101px;width:22px;height:835px;background:linear-gradient(90deg,#2e2e2e,#373737);"></div>
<div class="a" style="left:1235.6px;top:515.2px;width:2.8px;height:2.8px;background:#eeeeee;border-radius:50%"></div>
<div class="a" style="left:1235.6px;top:519.7px;width:2.8px;height:2.8px;background:#eeeeee;border-radius:50%"></div>
<div class="a" style="left:1235.6px;top:524.2px;width:2.8px;height:2.8px;background:#eeeeee;border-radius:50%"></div>
<div class="a" style="left:1206px;top:101px;width:25px;height:21px;border:1px solid #1f1f1f;border-radius:5px;background:#2b2b2b"></div>
<svg class="a" style="left:1210px;top:105px;" width="16" height="13" viewBox="0 0 16 13"><rect x="1.5" y="1" width="13" height="8.5" rx="1" fill="none" stroke="#eee" stroke-width="1.3"/><path d="M6 11.5 H10 M4.5 12.5 H11.5" stroke="#eee" stroke-width="1.2"/></svg>
<div class="a" style="left:1206px;top:923px;width:25px;height:18px;border:1px solid #1f1f1f;border-radius:5px;background:#2b2b2b"></div>
<svg class="a" style="left:1209px;top:924px;" width="18" height="17" viewBox="0 0 18 17"><circle cx="9" cy="4.9" r="2.9" fill="none" stroke="#ddd" stroke-width="1"/><circle cx="4.8" cy="11.8" r="3.6" fill="none" stroke="#ddd" stroke-width="1"/><circle cx="13.2" cy="11.8" r="3.6" fill="none" stroke="#ddd" stroke-width="1"/><circle cx="4.8" cy="11.8" r="2.1" fill="#1a9a1a"/><circle cx="13.2" cy="11.8" r="2.1" fill="#f0209a"/></svg>
<div class="a" style="left:0px;top:941px;width:1920px;height:37px;background:#353535;"></div>
<div class="a" style="left:35px;top:960px;width:16px;height:16px;background:#000000;"></div>
<div class="a" style="left:52px;top:960px;width:16px;height:16px;background:#1a1a1a;"></div>
<div class="a" style="left:69px;top:960px;width:16px;height:16px;background:#333333;"></div>
<div class="a" style="left:86px;top:960px;width:16px;height:16px;background:#4d4d4d;"></div>
<div class="a" style="left:103px;top:960px;width:16px;height:16px;background:#666666;"></div>
<div class="a" style="left:120px;top:960px;width:16px;height:16px;background:#808080;"></div>
<div class="a" style="left:137px;top:960px;width:16px;height:16px;background:#999999;"></div>
<div class="a" style="left:154px;top:960px;width:16px;height:16px;background:#b3b3b3;"></div>
<div class="a" style="left:171px;top:960px;width:16px;height:16px;background:#cccccc;"></div>
<div class="a" style="left:188px;top:960px;width:16px;height:16px;background:#e6e6e6;"></div>
<div class="a" style="left:205px;top:960px;width:16px;height:16px;background:#ececec;"></div>
<div class="a" style="left:222px;top:960px;width:16px;height:16px;background:#f2f2f2;"></div>
<div class="a" style="left:239px;top:960px;width:16px;height:16px;background:#f9f9f9;"></div>
<div class="a" style="left:256px;top:960px;width:16px;height:16px;background:#ffffff;"></div>
<div class="a" style="left:273px;top:960px;width:16px;height:16px;background:#800000;"></div>
<div class="a" style="left:290px;top:960px;width:16px;height:16px;background:#ff0000;"></div>
<div class="a" style="left:307px;top:960px;width:16px;height:16px;background:#808000;"></div>
<div class="a" style="left:324px;top:960px;width:16px;height:16px;background:#ffff00;"></div>
<div class="a" style="left:341px;top:960px;width:16px;height:16px;background:#008000;"></div>
<div class="a" style="left:358px;top:960px;width:16px;height:16px;background:#00ff00;"></div>
<div class="a" style="left:375px;top:960px;width:16px;height:16px;background:#008080;"></div>
<div class="a" style="left:392px;top:960px;width:16px;height:16px;background:#00ffff;"></div>
<div class="a" style="left:409px;top:960px;width:16px;height:16px;background:#000080;"></div>
<div class="a" style="left:426px;top:960px;width:16px;height:16px;background:#0000ff;"></div>
<div class="a" style="left:443px;top:960px;width:16px;height:16px;background:#800080;"></div>
<div class="a" style="left:460px;top:960px;width:16px;height:16px;background:#ff00ff;"></div>
<div class="a" style="left:477px;top:960px;width:16px;height:16px;background:#2b0000;"></div>
<div class="a" style="left:494px;top:960px;width:16px;height:16px;background:#550000;"></div>
<div class="a" style="left:511px;top:960px;width:16px;height:16px;background:#800000;"></div>
<div class="a" style="left:528px;top:960px;width:16px;height:16px;background:#aa0000;"></div>
<div class="a" style="left:545px;top:960px;width:16px;height:16px;background:#d40000;"></div>
<div class="a" style="left:562px;top:960px;width:16px;height:16px;background:#ff0000;"></div>
<div class="a" style="left:579px;top:960px;width:16px;height:16px;background:#ff2a2a;"></div>
<div class="a" style="left:596px;top:960px;width:16px;height:16px;background:#ff5555;"></div>
<div class="a" style="left:613px;top:960px;width:16px;height:16px;background:#ff8080;"></div>
<div class="a" style="left:630px;top:960px;width:16px;height:16px;background:#ffaaaa;"></div>
<div class="a" style="left:647px;top:960px;width:16px;height:16px;background:#ffd5d5;"></div>
<div class="a" style="left:664px;top:960px;width:16px;height:16px;background:#280b0b;"></div>
<div class="a" style="left:681px;top:960px;width:16px;height:16px;background:#501616;"></div>
<div class="a" style="left:698px;top:960px;width:16px;height:16px;background:#782121;"></div>
<div class="a" style="left:715px;top:960px;width:16px;height:16px;background:#a02c2c;"></div>
<div class="a" style="left:732px;top:960px;width:16px;height:16px;background:#c83737;"></div>
<div class="a" style="left:749px;top:960px;width:16px;height:16px;background:#d35f5f;"></div>
<div class="a" style="left:766px;top:960px;width:16px;height:16px;background:#de8787;"></div>
<div class="a" style="left:783px;top:960px;width:16px;height:16px;background:#e9afaf;"></div>
<div class="a" style="left:800px;top:960px;width:16px;height:16px;background:#f4d7d7;"></div>
<div class="a" style="left:817px;top:960px;width:16px;height:16px;background:#241c1c;"></div>
<div class="a" style="left:834px;top:960px;width:16px;height:16px;background:#483737;"></div>
<div class="a" style="left:851px;top:960px;width:16px;height:16px;background:#6c5353;"></div>
<div class="a" style="left:868px;top:960px;width:16px;height:16px;background:#916f6f;"></div>
<div class="a" style="left:885px;top:960px;width:16px;height:16px;background:#ac9393;"></div>
<div class="a" style="left:902px;top:960px;width:16px;height:16px;background:#c8b7b7;"></div>
<div class="a" style="left:919px;top:960px;width:16px;height:16px;background:#e3dbdb;"></div>
<div class="a" style="left:936px;top:960px;width:16px;height:16px;background:#2b1100;"></div>
<div class="a" style="left:953px;top:960px;width:16px;height:16px;background:#552200;"></div>
<div class="a" style="left:970px;top:960px;width:16px;height:16px;background:#803300;"></div>
<div class="a" style="left:987px;top:960px;width:16px;height:16px;background:#aa4400;"></div>
<div class="a" style="left:1004px;top:960px;width:16px;height:16px;background:#d45500;"></div>
<div class="a" style="left:1021px;top:960px;width:16px;height:16px;background:#ff6600;"></div>
<div class="a" style="left:1038px;top:960px;width:16px;height:16px;background:#ff7f2a;"></div>
<div class="a" style="left:1055px;top:960px;width:16px;height:16px;background:#ff9955;"></div>
<div class="a" style="left:1072px;top:960px;width:16px;height:16px;background:#ffb380;"></div>
<div class="a" style="left:1089px;top:960px;width:16px;height:16px;background:#ffccaa;"></div>
<div class="a" style="left:1106px;top:960px;width:16px;height:16px;background:#ffe6d5;"></div>
<div class="a" style="left:1123px;top:960px;width:16px;height:16px;background:#28170b;"></div>
<div class="a" style="left:1140px;top:960px;width:16px;height:16px;background:#502d16;"></div>
<div class="a" style="left:1157px;top:960px;width:16px;height:16px;background:#784421;"></div>
<div class="a" style="left:1174px;top:960px;width:16px;height:16px;background:#a05a2c;"></div>
<div class="a" style="left:1191px;top:960px;width:16px;height:16px;background:#c87137;"></div>
<div class="a" style="left:1208px;top:960px;width:16px;height:16px;background:#d38d5f;"></div>
<div class="a" style="left:1225px;top:960px;width:16px;height:16px;background:#deaa87;"></div>
<div class="a" style="left:1242px;top:960px;width:16px;height:16px;background:#e9c6af;"></div>
<div class="a" style="left:1259px;top:960px;width:16px;height:16px;background:#f4e3d7;"></div>
<div class="a" style="left:1276px;top:960px;width:16px;height:16px;background:#241f1c;"></div>
<div class="a" style="left:1293px;top:960px;width:16px;height:16px;background:#483e37;"></div>
<div class="a" style="left:1310px;top:960px;width:16px;height:16px;background:#6c5d53;"></div>
<div class="a" style="left:1327px;top:960px;width:16px;height:16px;background:#917c6f;"></div>
<div class="a" style="left:1344px;top:960px;width:16px;height:16px;background:#ac9d93;"></div>
<div class="a" style="left:1361px;top:960px;width:16px;height:16px;background:#c8beb7;"></div>
<div class="a" style="left:1378px;top:960px;width:16px;height:16px;background:#e3dedb;"></div>
<div class="a" style="left:1395px;top:960px;width:16px;height:16px;background:#2b2200;"></div>
<div class="a" style="left:1412px;top:960px;width:16px;height:16px;background:#554400;"></div>
<div class="a" style="left:1429px;top:960px;width:16px;height:16px;background:#806600;"></div>
<div class="a" style="left:1446px;top:960px;width:16px;height:16px;background:#aa8800;"></div>
<div class="a" style="left:1463px;top:960px;width:16px;height:16px;background:#d4aa00;"></div>
<div class="a" style="left:1480px;top:960px;width:16px;height:16px;background:#ffcc00;"></div>
<div class="a" style="left:1497px;top:960px;width:16px;height:16px;background:#ffd42a;"></div>
<div class="a" style="left:1514px;top:960px;width:16px;height:16px;background:#ffdd55;"></div>
<div class="a" style="left:1531px;top:960px;width:16px;height:16px;background:#ffe680;"></div>
<div class="a" style="left:1548px;top:960px;width:16px;height:16px;background:#ffeeaa;"></div>
<div class="a" style="left:1565px;top:960px;width:16px;height:16px;background:#fff6d5;"></div>
<div class="a" style="left:1582px;top:960px;width:16px;height:16px;background:#28220b;"></div>
<div class="a" style="left:1599px;top:960px;width:16px;height:16px;background:#504416;"></div>
<div class="a" style="left:1616px;top:960px;width:16px;height:16px;background:#786721;"></div>
<div class="a" style="left:1633px;top:960px;width:16px;height:16px;background:#a0892c;"></div>
<div class="a" style="left:1650px;top:960px;width:16px;height:16px;background:#c8ab37;"></div>
<div class="a" style="left:1667px;top:960px;width:16px;height:16px;background:#d3bc5f;"></div>
<div class="a" style="left:1684px;top:960px;width:16px;height:16px;background:#decd87;"></div>
<div class="a" style="left:1701px;top:960px;width:16px;height:16px;background:#e9ddaf;"></div>
<div class="a" style="left:1718px;top:960px;width:16px;height:16px;background:#f4eed7;"></div>
<div class="a" style="left:1735px;top:960px;width:16px;height:16px;background:#24221c;"></div>
<div class="a" style="left:1752px;top:960px;width:16px;height:16px;background:#484537;"></div>
<div class="a" style="left:1769px;top:960px;width:16px;height:16px;background:#6c6753;"></div>
<div class="a" style="left:1786px;top:960px;width:16px;height:16px;background:#918a6f;"></div>
<div class="a" style="left:1803px;top:960px;width:16px;height:16px;background:#aca793;"></div>
<div class="a" style="left:1820px;top:960px;width:16px;height:16px;background:#c8c4b7;"></div>
<div class="a" style="left:1px;top:943px;width:33px;height:33px;background:#ffffff;"></div>
<svg class="a" style="left:1px;top:943px;" width="33" height="33" viewBox="0 0 33 33"><path d="M3 3 L30 30 M30 3 L3 30" stroke="#c8203c" stroke-width="2.2" stroke-linecap="round"/></svg>
<svg class="a" style="left:1845px;top:955px;" width="14" height="9" viewBox="0 0 14 9"><path d="M1 7.5 L7 1.5 L13 7.5" stroke="#eee" stroke-width="1.6" fill="none"/></svg>
<svg class="a" style="left:1876px;top:954px;" width="14" height="9" viewBox="0 0 14 9"><path d="M1 1.5 L7 7.5 L13 1.5" stroke="#eee" stroke-width="1.6" fill="none"/></svg>
<div class="a" style="left:1899px;top:949px;width:20px;height:27px;border:1px solid #1f1f1f;border-radius:5px;background:#323232"></div>
<svg class="a" style="left:1902px;top:956px;" width="14" height="14" viewBox="0 0 14 14"><path d="M0 2 H14 M0 7 H14 M0 12 H14" stroke="#f4f4f4" stroke-width="2"/></svg>
<div class="a" style="left:0px;top:978px;width:1920px;height:42px;background:#353535;"></div>
<div class="t" style="left:22.70px;top:982.21px;font-size:15.7px;color:#e0e0e0;transform:scaleX(0.8898);transform-origin:0 0;">Fond :</div>
<div class="t" style="left:89.60px;top:982.21px;font-size:15.7px;color:#e0e0e0;transform:scaleX(1.0011);transform-origin:0 0;">N/A</div>
<div class="t" style="left:2.00px;top:1002.91px;font-size:15.7px;color:#e0e0e0;transform:scaleX(0.9338);transform-origin:0 0;">Contour :</div>
<div class="t" style="left:89.60px;top:1002.91px;font-size:15.7px;color:#e0e0e0;transform:scaleX(1.0011);transform-origin:0 0;">N/A</div>
<div class="t" style="left:171.90px;top:992.01px;font-size:15.7px;color:#e0e0e0;transform:scaleX(0.8598);transform-origin:0 0;">O :</div>
<div class="fld" style="left:192px;top:978px;width:73px;height:42px;background:#303030"></div>
<div class="a" style="left:230.5px;top:979px;width:1px;height:40px;background:#2a2a2a;"></div>
<div class="a" style="left:247.5px;top:979px;width:1px;height:40px;background:#2a2a2a;"></div>
<div class="t" style="left:201.00px;top:991.71px;font-size:15.7px;color:#8a8a8a;transform:scaleX(0.8781);transform-origin:0 0;">100</div>
<div class="a" style="left:233px;top:998.5px;width:11px;height:1.3px;background:#595959;"></div>
<div class="a" style="left:250px;top:998.5px;width:12px;height:1.3px;background:#595959;"></div>
<div class="a" style="left:255.4px;top:993px;width:1.3px;height:12px;background:#595959;"></div>
<div class="a" style="left:278px;top:988px;width:3px;height:21px;background:#f0f0f0;"></div>
<div class="t" style="left:287.00px;top:991.71px;font-size:15.7px;color:#dddddd;font-style:italic;transform:scaleX(0.9784);transform-origin:0 0;">[root]</div>
<svg class="a" style="left:343px;top:991px;" width="16" height="15" viewBox="0 0 16 15"><path d="M1.5 8 Q8 1.5 14.5 8 Q8 14.5 1.5 8Z" fill="none" stroke="#7a7a7a" stroke-width="1.6"/><circle cx="8" cy="8" r="2.2" fill="#7a7a7a"/><path d="M8 1 V3.5 M4 2 L5 4 M12 2 L11 4" stroke="#7a7a7a" stroke-width="1.2"/></svg>
<svg class="a" style="left:381px;top:991px;" width="15" height="16" viewBox="0 0 15 16"><rect x="1" y="7" width="9" height="8" fill="#7a7a7a"/><path d="M8 7 V4.5 Q8 1.5 10.8 1.5 Q13.5 1.5 13.5 4.5 V6" stroke="#7a7a7a" stroke-width="1.8" fill="none"/></svg>
<div class="a" style="left:405px;top:985px;width:1px;height:28px;background:#2d2d2d;"></div>
<div class="t" style="left:413.20px;top:991.71px;font-size:15.7px;color:#e6e6e6;transform:scaleX(0.9535);transform-origin:0 0;">Aucun objet sélectionné. Sélectionnez des objets par Clic, Shift+Clic ou Alt+molette, ou cliquez-déplacez autour des objets à sélectionner.</div>
<div class="a" style="left:1561px;top:981px;width:1px;height:37px;background:#2d2d2d;"></div>
<div class="t" style="left:1571.70px;top:982.21px;font-size:15.7px;color:#e0e0e0;transform:scaleX(0.8231);transform-origin:0 0;">X :</div>
<div class="t" style="left:1603.00px;top:982.21px;font-size:15.7px;color:#e0e0e0;transform:scaleX(0.8539);transform-origin:0 0;">171,37</div>
<div class="t" style="left:1571.70px;top:1002.81px;font-size:15.7px;color:#e0e0e0;transform:scaleX(0.8355);transform-origin:0 0;">Y :</div>
<div class="t" style="left:1603.00px;top:1002.81px;font-size:15.7px;color:#e0e0e0;transform:scaleX(0.8747);transform-origin:0 0;">246,96</div>
<div class="t" style="left:1655.00px;top:991.91px;font-size:15.7px;color:#e0e0e0;transform:scaleX(0.8573);transform-origin:0 0;">Z :</div>
<div class="fld" style="left:1671px;top:978px;width:100px;height:41px;background:#303030"></div>
<div class="a" style="left:1726px;top:979px;width:1px;height:39px;background:#2a2a2a;"></div>
<div class="a" style="left:1747px;top:979px;width:1px;height:39px;background:#2a2a2a;"></div>
<div class="t" style="left:1684.60px;top:991.91px;font-size:15.7px;color:#f0f0f0;transform:scaleX(0.8688);transform-origin:0 0;">71%</div>
<div class="a" style="left:1731px;top:998.5px;width:12px;height:2px;background:#f0f0f0;"></div>
<div class="a" style="left:1752px;top:998.5px;width:12px;height:2px;background:#f0f0f0;"></div>
<div class="a" style="left:1757px;top:993px;width:2px;height:12px;background:#f0f0f0;"></div>
<div class="t" style="left:1781.60px;top:991.91px;font-size:15.7px;color:#e0e0e0;transform:scaleX(0.7676);transform-origin:0 0;">R :</div>
<div class="fld" style="left:1797px;top:978px;width:108px;height:41px;background:#303030"></div>
<div class="a" style="left:1860.5px;top:979px;width:1px;height:39px;background:#2a2a2a;"></div>
<div class="a" style="left:1881.5px;top:979px;width:1px;height:39px;background:#2a2a2a;"></div>
<div class="t" style="left:1814.30px;top:991.91px;font-size:15.7px;color:#f0f0f0;transform:scaleX(0.8743);transform-origin:0 0;">0,00°</div>
<div class="a" style="left:1865px;top:998.5px;width:12px;height:2px;background:#f0f0f0;"></div>
<div class="a" style="left:1886px;top:998.5px;width:12px;height:2px;background:#f0f0f0;"></div>
<div class="a" style="left:1891px;top:993px;width:2px;height:12px;background:#f0f0f0;"></div>
<div class="a" style="left:1243px;top:106px;width:628px;height:830px;background:#2e2e2e;"></div>
<div class="a" style="left:1243px;top:106px;width:628px;height:37px;background:#262626;"></div>
<div class="a" style="left:1243px;top:142px;width:628px;height:1px;background:#1e1e1e;"></div>
<div class="a" style="left:1316px;top:106px;width:165px;height:37px;background:#2b2b2b;"></div>
<div class="a" style="left:1316px;top:139px;width:165px;height:4px;background:#1c5cb0;"></div>
<svg class="a" style="left:1270px;top:117px;" width="20" height="15" viewBox="0 0 20 15"><path d="M4 1 H13 L10.5 4 H1.5 Z" fill="#1e9be8"/><path d="M6 6 H15 L12.5 9 H3.5 Z" fill="#8ecdf5"/><path d="M8 11 H17 L14.5 14 H5.5 Z" fill="#f0f0f0"/></svg>
<svg class="a" style="left:1327px;top:115px;" width="17" height="17" viewBox="0 0 17 17"><path d="M1.5 13 V1.5 H12" stroke="#ddd" stroke-width="1.2" fill="none"/><path d="M15.5 2.5 L7 11" stroke="#eee" stroke-width="2.4"/><path d="M7.5 10.5 L4.5 13.5 Q2.5 16 1 16 Q1.5 13.5 3.5 11.5 Z" fill="#1e9be8"/></svg>
<div class="t" style="left:1346.70px;top:117.21px;font-size:15.7px;color:#efefef;transform:scaleX(0.9458);transform-origin:0 0;">Fond et contour</div>
<svg class="a" style="left:1456px;top:119px;" width="10" height="10" viewBox="0 0 10 10"><path d="M1 1 L9 9 M9 1 L1 9" stroke="#9a9a9a" stroke-width="1.8"/></svg>
<svg class="a" style="left:1510px;top:117px;" width="16" height="14" viewBox="0 0 16 14"><rect x="1" y="1" width="14" height="12" fill="none" stroke="#1aa01a" stroke-width="1.3"/><path d="M4 11 L7 6.5 L10 11 Z" fill="#1aa01a"/><circle cx="11" cy="4.5" r="1.6" fill="#1aa01a"/></svg>
<svg class="a" style="left:1573px;top:116px;" width="18" height="16" viewBox="0 0 18 16"><path d="M1.5 1 H8.5 L12 4.5 V14.5 H1.5 Z" fill="none" stroke="#f0f0f0" stroke-width="2"/><path d="M8 9 H15" stroke="#1aa01a" stroke-width="2"/><path d="M13.5 6 L17 9 L13.5 12Z" fill="#1aa01a"/></svg>
<svg class="a" style="left:1637px;top:116px;" width="18" height="17" viewBox="0 0 18 17"><rect x="1" y="9" width="7" height="7" fill="#ececec"/><path d="M5 7 L13 14" stroke="#1aa01a" stroke-width="2.4"/><path d="M3.5 4 Q4 1 7 1.5 L5.5 3.5 L6.5 5 L8.5 4 Q9 7 5.5 7.5 Z" fill="#1aa01a"/><path d="M10.5 12.5 Q13.5 10.5 16 13 L14 14 L14.5 15.5 L16.5 15.5 Q15.5 18 12 16 Z" fill="#1aa01a"/></svg>
<svg class="a" style="left:1701px;top:116px;" width="18" height="17" viewBox="0 0 18 17"><rect x="1" y="9" width="7" height="7" fill="#ececec"/><path d="M5 7 L13 14" stroke="#1aa01a" stroke-width="2.4"/><path d="M3.5 4 Q4 1 7 1.5 L5.5 3.5 L6.5 5 L8.5 4 Q9 7 5.5 7.5 Z" fill="#1aa01a"/><path d="M10.5 12.5 Q13.5 10.5 16 13 L14 14 L14.5 15.5 L16.5 15.5 Q15.5 18 12 16 Z" fill="#1aa01a"/></svg>
<svg class="a" style="left:1766px;top:116px;" width="15" height="15" viewBox="0 0 15 15"><path d="M1 0.5 V14.5" stroke="#1aa01a" stroke-width="1.2"/><rect x="3.5" y="1" width="6" height="2.6" fill="#ececec"/><rect x="3.5" y="6" width="10" height="2.6" fill="#ececec"/><rect x="3.5" y="11" width="6" height="2.6" fill="#ececec"/></svg>
<div class="a" style="left:1840px;top:109px;width:29px;height:30px;background:#2e2e2e;border-radius:6px"></div>
<svg class="a" style="left:1848px;top:119px;" width="14" height="9" viewBox="0 0 14 9"><path d="M1 1.5 L7 7.5 L13 1.5" stroke="#9a9a9a" stroke-width="1.6" fill="none"/></svg>
<div class="a" style="left:1244px;top:144px;width:626px;height:688px;border:1px solid #1e1e1e;background:#2d2d2d"></div>
<div class="a" style="left:1245px;top:145px;width:624px;height:27px;background:#262626;"></div>
<div class="a" style="left:1245px;top:172px;width:624px;height:1px;background:#232323;"></div>
<div class="a" style="left:1260px;top:152.5px;width:14px;height:13px;background:#ececec;border-radius:1px"></div>
<div class="t" style="left:1279.00px;top:153.01px;font-size:15.7px;color:#eeeeee;transform:scaleX(0.9027);transform-origin:0 0;">Fond</div>
<div class="a" style="left:1335px;top:152.5px;width:13.5px;height:13px;border:1.5px solid #ececec;border-radius:1px"></div>
<div class="t" style="left:1354.00px;top:153.01px;font-size:15.7px;color:#eeeeee;transform:scaleX(0.9436);transform-origin:0 0;">Contour</div>
<svg class="a" style="left:1429px;top:152px;" width="16" height="14" viewBox="0 0 16 14"><path d="M1 5 H11" stroke="#1e9be8" stroke-width="1.6"/><path d="M9.5 1.5 L14 5 L9.5 8.5Z" fill="#1e9be8"/><path d="M1 8.5 H4 M6.5 8.5 H9" stroke="#ddd" stroke-width="1.3"/><path d="M1 12.5 H14" stroke="#ddd" stroke-width="1.5"/></svg>
<div class="t" style="left:1449.20px;top:153.01px;font-size:15.7px;color:#eeeeee;transform:scaleX(0.9431);transform-origin:0 0;">Style du contour</div>
<div class="a" style="left:1422px;top:170px;width:141px;height:3.5px;background:#1c5cb0;"></div>
<div class="t" style="left:1257.30px;top:192.61px;font-size:15.7px;color:#9c9c9c;transform:scaleX(0.8735);transform-origin:0 0;">Épaisseur :</div>
<div class="fld" style="left:1347px;top:181px;width:102px;height:35px"></div>
<div class="t" style="left:1355.50px;top:192.21px;font-size:15.7px;color:#9a9a9a;transform:scaleX(0.8833);transform-origin:0 0;">0,200</div>
<div class="a" style="left:1414px;top:182px;width:1px;height:33px;background:#2b2b2b;"></div>
<div class="a" style="left:1431px;top:182px;width:1px;height:33px;background:#2b2b2b;"></div>
<div class="a" style="left:1417px;top:198.0px;width:12px;height:1.3px;background:#5c5c5c;"></div>
<div class="a" style="left:1434px;top:198.0px;width:12px;height:1.3px;background:#5c5c5c;"></div>
<div class="a" style="left:1439.4px;top:192.5px;width:1.3px;height:12px;background:#5c5c5c;"></div>
<div class="fld" style="left:1453px;top:181px;width:136px;height:35px"></div>
<div class="t" style="left:1465.60px;top:192.61px;font-size:15.7px;color:#a8a8a8;transform:scaleX(0.9444);transform-origin:0 0;">mm</div>
<svg class="a" style="left:1565px;top:195px;" width="12" height="7" viewBox="0 0 12 7"><path d="M0 0 H11.5 L5.75 6.5Z" fill="#9c9c9c"/></svg>
<div class="t" style="left:1257.30px;top:230.51px;font-size:15.7px;color:#9c9c9c;transform:scaleX(0.9322);transform-origin:0 0;">Pointillés :</div>
<div class="fld" style="left:1347px;top:220px;width:163px;height:34px"></div>
<div class="a" style="left:1370px;top:235.7px;width:100.5px;height:2.4px;background:#f4f4f4;"></div>
<svg class="a" style="left:1485px;top:233.5px;" width="13" height="7" viewBox="0 0 13 7"><path d="M0 0 H12.5 L6.25 6.5Z" fill="#9c9c9c"/></svg>
<div class="fld" style="left:1514px;top:220px;width:75px;height:34px"></div>
<div class="t" style="left:1522.50px;top:230.21px;font-size:15.7px;color:#9a9a9a;transform:scaleX(0.8608);transform-origin:0 0;">0,00</div>
<div class="a" style="left:1554px;top:221px;width:1px;height:32px;background:#2b2b2b;"></div>
<div class="a" style="left:1571px;top:221px;width:1px;height:32px;background:#2b2b2b;"></div>
<div class="a" style="left:1557px;top:236.5px;width:12px;height:1.3px;background:#5c5c5c;"></div>
<div class="a" style="left:1574px;top:236.5px;width:12px;height:1.3px;background:#5c5c5c;"></div>
<div class="a" style="left:1579.4px;top:231.0px;width:1.3px;height:12px;background:#5c5c5c;"></div>
<div class="t" style="left:1257.30px;top:272.61px;font-size:15.7px;color:#9c9c9c;transform:scaleX(0.9121);transform-origin:0 0;">Marqueurs :</div>
<div class="fld" style="left:1347px;top:258px;width:78px;height:44px"></div>
<div class="a" style="left:1358px;top:280px;width:40px;height:1px;background:#5e5e5e;"></div>
<svg class="a" style="left:1405px;top:277px;" width="12" height="7" viewBox="0 0 12 7"><path d="M0 0 H11.5 L5.75 6Z" fill="#9c9c9c"/></svg>
<div class="fld" style="left:1429px;top:258px;width:78px;height:44px"></div>
<div class="a" style="left:1440px;top:280px;width:40px;height:1px;background:#5e5e5e;"></div>
<svg class="a" style="left:1487px;top:277px;" width="12" height="7" viewBox="0 0 12 7"><path d="M0 0 H11.5 L5.75 6Z" fill="#9c9c9c"/></svg>
<div class="fld" style="left:1511px;top:258px;width:78px;height:44px"></div>
<div class="a" style="left:1522px;top:280px;width:40px;height:1px;background:#5e5e5e;"></div>
<svg class="a" style="left:1569px;top:277px;" width="12" height="7" viewBox="0 0 12 7"><path d="M0 0 H11.5 L5.75 6Z" fill="#9c9c9c"/></svg>
<div class="t" style="left:1257.30px;top:317.21px;font-size:15.7px;color:#9c9c9c;transform:scaleX(0.9005);transform-origin:0 0;">Raccord :</div>
<div class="t" style="left:1257.30px;top:356.96px;font-size:15.7px;color:#9c9c9c;transform:scaleX(0.9180);transform-origin:0 0;">Terminaison :</div>
<div class="t" style="left:1257.30px;top:396.91px;font-size:15.7px;color:#9c9c9c;transform:scaleX(0.9130);transform-origin:0 0;">Ordre :</div>
<div class="fld" style="left:1347px;top:306.5px;width:35.5px;height:35px"></div>
<svg class="a" style="left:1354.5px;top:312.5px;" width="22" height="22" viewBox="0 0 22 22"><path d="M1 21 V7 L7 1 H21 V13 H13 V21 Z" fill="#8c8c8c"/><path d="M8 21 V8 H21" stroke="#303030" stroke-width="1.6" stroke-dasharray="1.6 1.6" fill="none"/></svg>
<div class="btnb" style="left:1387.5px;top:306.5px;width:35.5px;height:35px"></div>
<svg class="a" style="left:1395.0px;top:312.5px;" width="22" height="22" viewBox="0 0 22 22"><path d="M1 21 V9 Q1 1 9 1 H21 V13 H13 V21 Z" fill="#94a8c6"/><path d="M8 21 V8 H21" stroke="#1f4577" stroke-width="1.6" stroke-dasharray="1.6 1.6" fill="none"/></svg>
<div class="fld" style="left:1427.5px;top:306.5px;width:35.5px;height:35px"></div>
<svg class="a" style="left:1435.0px;top:312.5px;" width="22" height="22" viewBox="0 0 22 22"><path d="M1 21 V1 H21 V13 H13 V21 Z" fill="#8c8c8c"/><path d="M8 21 V8 H21" stroke="#303030" stroke-width="1.6" stroke-dasharray="1.6 1.6" fill="none"/></svg>
<div class="fld" style="left:1467px;top:306.5px;width:91px;height:35px"></div>
<div class="t" style="left:1475.50px;top:317.21px;font-size:15.7px;color:#9a9a9a;transform:scaleX(0.8608);transform-origin:0 0;">4,00</div>
<div class="a" style="left:1523px;top:307.5px;width:1px;height:33px;background:#2b2b2b;"></div>
<div class="a" style="left:1540px;top:307.5px;width:1px;height:33px;background:#2b2b2b;"></div>
<div class="a" style="left:1526px;top:323.5px;width:12px;height:1.3px;background:#5c5c5c;"></div>
<div class="a" style="left:1543px;top:323.5px;width:12px;height:1.3px;background:#5c5c5c;"></div>
<div class="a" style="left:1548.4px;top:318.0px;width:1.3px;height:12px;background:#5c5c5c;"></div>
<div class="fld" style="left:1347px;top:346.5px;width:35.5px;height:35px"></div>
<svg class="a" style="left:1356.5px;top:355px;" width="17" height="20" viewBox="0 0 17 20"><rect x="1" y="5" width="3.5" height="14" fill="#8c8c8c"/><rect x="12" y="5" width="3.5" height="14" fill="#8c8c8c"/><path d="M8.2 5 V19" stroke="#8c8c8c" stroke-width="1.6" stroke-dasharray="1.6 1.6"/></svg>
<div class="btnb" style="left:1387.5px;top:346.5px;width:35.5px;height:35px"></div>
<svg class="a" style="left:1397.0px;top:352px;" width="17" height="23" viewBox="0 0 17 23"><path d="M1 22 V8 Q1 1 8.5 1 Q16 1 16 8 V22 H12 V8.5 Q12 5 8.5 5 Q5 5 5 8.5 V22Z" fill="#94a8c6"/><path d="M8.5 8 V22" stroke="#94a8c6" stroke-width="1.6" stroke-dasharray="1.6 1.6"/></svg>
<div class="fld" style="left:1427.5px;top:346.5px;width:35.5px;height:35px"></div>
<svg class="a" style="left:1437.0px;top:354.5px;" width="17" height="20" viewBox="0 0 17 20"><path d="M1 20 V1 H16 V20 H12 V5 H5 V20Z" fill="#8c8c8c"/><path d="M8.5 6 V20" stroke="#8c8c8c" stroke-width="1.6" stroke-dasharray="1.6 1.6"/></svg>
<div class="btnb" style="left:1347px;top:386.5px;width:35.5px;height:35px"></div>
<svg class="a" style="left:1351.5px;top:391.5px;" width="26" height="25" viewBox="0 0 26 25"><rect x="7" y="6" width="18" height="18" fill="#9db0cc"/><rect x="11" y="10" width="14" height="14" fill="#8a3585"/><circle cx="9.5" cy="8.5" r="8.5" fill="#1c74b8"/></svg>
<div class="fld" style="left:1387.5px;top:386.5px;width:35.5px;height:35px"></div>
<svg class="a" style="left:1392.0px;top:391.5px;" width="26" height="25" viewBox="0 0 26 25"><rect x="7" y="6" width="18" height="18" fill="#8c8c8c"/><circle cx="9.5" cy="8.5" r="8.5" fill="#226c92"/><rect x="10" y="9" width="15" height="15" fill="#8c2a5e"/></svg>
<div class="fld" style="left:1427.5px;top:386.5px;width:35.5px;height:35px"></div>
<svg class="a" style="left:1432.0px;top:391.5px;" width="26" height="25" viewBox="0 0 26 25"><circle cx="9.5" cy="8.5" r="8.5" fill="#226c92"/><rect x="7" y="6" width="18" height="18" fill="#8c8c8c"/><rect x="13" y="12" width="12" height="12" fill="#8c2a5e"/></svg>
<div class="fld" style="left:1347px;top:426.5px;width:35.5px;height:35px"></div>
<svg class="a" style="left:1351.5px;top:431.5px;" width="26" height="25" viewBox="0 0 26 25"><circle cx="9.5" cy="8.5" r="8.5" fill="#226c92"/><rect x="7" y="6" width="18" height="18" fill="#8c8c8c"/><rect x="11" y="11" width="14" height="13" fill="#8c2a5e"/></svg>
<div class="fld" style="left:1387.5px;top:426.5px;width:35.5px;height:35px"></div>
<svg class="a" style="left:1392.0px;top:431.5px;" width="26" height="25" viewBox="0 0 26 25"><rect x="7" y="6" width="18" height="18" fill="#8c8c8c"/><circle cx="9.5" cy="8.5" r="8.5" fill="#226c92"/><rect x="10" y="9" width="15" height="15" fill="#8c2a5e"/></svg>
<div class="fld" style="left:1427.5px;top:426.5px;width:35.5px;height:35px"></div>
<svg class="a" style="left:1432.0px;top:431.5px;" width="26" height="25" viewBox="0 0 26 25"><circle cx="9.5" cy="8.5" r="8.5" fill="#226c92"/><rect x="7" y="6" width="18" height="18" fill="#8c8c8c"/><rect x="9" y="8" width="16" height="16" fill="#8c2a5e"/></svg>
<div class="t" style="left:1569.25px;top:846.11px;font-size:15.7px;color:#9c9c9c;transform:scaleX(0.9633);transform-origin:0 0;">Mode de fondu :</div>
<div class="fld" style="left:1679px;top:835.5px;width:188px;height:34px"></div>
<div class="t" style="left:1691.30px;top:846.11px;font-size:15.7px;color:#a0a0a0;transform:scaleX(0.9705);transform-origin:0 0;">Normal</div>
<svg class="a" style="left:1844px;top:849px;" width="12" height="7" viewBox="0 0 12 7"><path d="M0 0 H11.5 L5.75 6.5Z" fill="#9c9c9c"/></svg>
<div class="fld" style="left:1248px;top:873.5px;width:618px;height:26px;background:#323232;border-radius:4px"></div>
<div class="a" style="left:1788.5px;top:874.5px;width:1px;height:24px;background:#222;"></div>
<div class="a" style="left:1831px;top:874.5px;width:1px;height:24px;background:#2a2a2a;"></div>
<div class="a" style="left:1848.5px;top:874.5px;width:1px;height:24px;background:#2a2a2a;"></div>
<div class="t" style="left:1253.30px;top:878.91px;font-size:15.7px;color:#8a8a8a;transform:scaleX(0.8935);transform-origin:0 0;">Flou (%)</div>
<div class="t" style="left:1796.10px;top:879.01px;font-size:15.7px;color:#9a9a9a;transform:scaleX(0.8523);transform-origin:0 0;">0,0</div>
<div class="a" style="left:1835px;top:886.0px;width:11px;height:1.3px;background:#5c5c5c;"></div>
<div class="a" style="left:1852px;top:886.0px;width:11px;height:1.3px;background:#5c5c5c;"></div>
<div class="a" style="left:1856.9px;top:881.0px;width:1.3px;height:11px;background:#5c5c5c;"></div>
<div class="fld" style="left:1248px;top:904.5px;width:618px;height:26px;background:#323232;border-radius:4px"></div>
<div class="a" style="left:1788.5px;top:905.5px;width:1px;height:24px;background:#222;"></div>
<div class="a" style="left:1831px;top:905.5px;width:1px;height:24px;background:#2a2a2a;"></div>
<div class="a" style="left:1848.5px;top:905.5px;width:1px;height:24px;background:#2a2a2a;"></div>
<div class="t" style="left:1253.30px;top:909.91px;font-size:15.7px;color:#f0f0f0;transform:scaleX(0.9290);transform-origin:0 0;">Opacité (%)</div>
<div class="t" style="left:1797.00px;top:910.01px;font-size:15.7px;color:#9a9a9a;transform:scaleX(0.8655);transform-origin:0 0;">100,0</div>
<div class="a" style="left:1835px;top:917.0px;width:11px;height:1.3px;background:#5c5c5c;"></div>
<div class="a" style="left:1852px;top:917.0px;width:11px;height:1.3px;background:#5c5c5c;"></div>
<div class="a" style="left:1856.9px;top:912.0px;width:1.3px;height:11px;background:#5c5c5c;"></div>
<svg class="a" style="left:1889px;top:114px;" width="19" height="18" viewBox="0 0 19 18"><path d="M1.5 3 H9 L13 7 V16.5 H1.5 Z" fill="none" stroke="#ececec" stroke-width="2"/><path d="M15 0.5 L15.9 2.8 L18 3 L16.4 4.5 L16.9 6.8 L15 5.6 L13.1 6.8 L13.6 4.5 L12 3 L14.1 2.8Z" fill="#1aa01a"/></svg>
<svg class="a" style="left:1889px;top:150px;" width="18" height="18" viewBox="0 0 18 18"><path d="M1 1 H7 L8.5 3 H15 V6 H5 L1 14 Z" fill="#ececec"/><path d="M4 7 H17.5 L14.5 14.5 H1 Z" fill="#ececec"/></svg>
<svg class="a" style="left:1889px;top:183px;" width="18" height="18" viewBox="0 0 18 18"><path d="M9 0.5 V7" stroke="#1aa01a" stroke-width="2"/><path d="M5.5 5.5 L9 9 L12.5 5.5Z" fill="#1aa01a"/><path d="M2 9 V16.5 H16 V9 H13 V12 H5 V9Z" fill="#ececec"/></svg>
<svg class="a" style="left:1889px;top:219px;" width="18" height="18" viewBox="0 0 18 18"><rect x="4.5" y="1" width="9" height="3" fill="#ececec"/><rect x="1" y="5" width="16" height="6" fill="#ececec"/><rect x="4.5" y="9.5" width="9" height="5" fill="#ececec"/></svg>
<div class="a" style="left:1880px;top:251px;width:35px;height:1px;background:#2f2f2f;"></div>
<svg class="a" style="left:1889px;top:267px;" width="18" height="18" viewBox="0 0 18 18"><path d="M4 5 V1.5 H11 L15 5.5 V16 H4 V12" fill="none" stroke="#ececec" stroke-width="2"/><path d="M1 8.5 H9" stroke="#1aa01a" stroke-width="2"/><path d="M8 5 L11.5 8.5 L8 12Z" fill="#1aa01a"/></svg>
<svg class="a" style="left:1889px;top:303px;" width="18" height="18" viewBox="0 0 18 18"><path d="M1.5 1.5 H9 L12 4.5 V16 H1.5 Z" fill="none" stroke="#ececec" stroke-width="2"/><path d="M7 10 H15" stroke="#1aa01a" stroke-width="2"/><path d="M14 6.5 L17.5 10 L14 13.5Z" fill="#1aa01a"/></svg>
<div class="a" style="left:1880px;top:335px;width:35px;height:1px;background:#2f2f2f;"></div>
<svg class="a" style="left:1889px;top:353px;" width="18" height="18" viewBox="0 0 18 18"><path d="M4 5 H11 Q15 5 15 9 Q15 12.5 11 12.5 H10" fill="none" stroke="#ececec" stroke-width="2"/><path d="M6 1.5 L2 5 L6 8.5Z" fill="#ececec"/></svg>
<svg class="a" style="left:1889px;top:388px;" width="18" height="18" viewBox="0 0 18 18"><path d="M14 5 H7 Q3 5 3 9 Q3 12.5 7 12.5 H8" fill="none" stroke="#7a7a7a" stroke-width="2"/><path d="M12 1.5 L16 5 L12 8.5Z" fill="#7a7a7a"/></svg>
<div class="a" style="left:1880px;top:420px;width:35px;height:1px;background:#2f2f2f;"></div>
<svg class="a" style="left:1889px;top:435px;" width="18" height="18" viewBox="0 0 18 18"><rect x="1" y="1" width="11" height="11" fill="#ececec" stroke="#353535" stroke-width="1"/><rect x="5" y="5" width="12" height="12" fill="#ececec" stroke="#353535" stroke-width="1.2"/></svg>
<svg class="a" style="left:1889px;top:470px;" width="18" height="18" viewBox="0 0 18 18"><path d="M5 1 L12 12 M13 1 L6 12" stroke="#ececec" stroke-width="1.6"/><circle cx="5" cy="13.5" r="2.6" fill="none" stroke="#ececec" stroke-width="1.8"/><circle cx="13" cy="13.5" r="2.6" fill="none" stroke="#ececec" stroke-width="1.8"/></svg>
<svg class="a" style="left:1889px;top:506px;" width="18" height="18" viewBox="0 0 18 18"><path d="M1.5 3 V16 H15 V3" fill="none" stroke="#ececec" stroke-width="1.5"/><path d="M5 1 H11 V3 H13 V14 H6 L3.5 11.5 V3 H5Z" fill="#ececec"/></svg>
<div class="a" style="left:1880px;top:538px;width:35px;height:1px;background:#2f2f2f;"></div>
<svg class="a" style="left:1889px;top:555px;" width="18" height="18" viewBox="0 0 18 18"><circle cx="8" cy="8" r="7.5" fill="#ececec"/><rect x="3.5" y="3.5" width="9" height="9" fill="none" stroke="#353535" stroke-width="1.2" stroke-dasharray="1.2 1.2"/><path d="M13 13 L17 17" stroke="#ececec" stroke-width="2.2"/></svg>
<svg class="a" style="left:1889px;top:590px;" width="18" height="18" viewBox="0 0 18 18"><circle cx="8" cy="8" r="7.5" fill="#ececec"/><path d="M4 4 H9 V7 H12 V12 H7 V9 H4Z" fill="none" stroke="#353535" stroke-width="1.4"/><path d="M13 13 L17 17" stroke="#ececec" stroke-width="2.2"/></svg>
<svg class="a" style="left:1889px;top:625px;" width="18" height="18" viewBox="0 0 18 18"><circle cx="8" cy="8" r="7.5" fill="#ececec"/><rect x="5.5" y="3.5" width="5" height="9" fill="none" stroke="#353535" stroke-width="1.4"/><path d="M13 13 L17 17" stroke="#ececec" stroke-width="2.2"/></svg>
<svg class="a" style="left:1889px;top:660px;" width="18" height="18" viewBox="0 0 18 18"><path d="M1 4 V1 H4 M13 1 H16 V4 M16 13 V16 H13 M4 16 H1 V13" stroke="#aaa" stroke-width="1" fill="none"/><rect x="3.5" y="3.5" width="10" height="10" fill="none" stroke="#ececec" stroke-width="1.5"/><path d="M8.5 5.5 V11.5 M5.5 8.5 H11.5" stroke="#ececec" stroke-width="1.5"/></svg>
<div class="a" style="left:1880px;top:692px;width:35px;height:1px;background:#2f2f2f;"></div>
<svg class="a" style="left:1889px;top:709px;" width="18" height="18" viewBox="0 0 18 18"><rect x="1" y="1" width="10" height="10" fill="#ececec"/><rect x="5" y="5" width="12" height="12" fill="#353535"/><rect x="6" y="6" width="11" height="11" fill="#1aa01a"/></svg>
<svg class="a" style="left:1889px;top:744px;" width="18" height="18" viewBox="0 0 18 18"><rect x="1" y="1" width="10" height="10" fill="#ececec"/><rect x="5" y="5" width="12" height="12" fill="#353535"/><rect x="6" y="6" width="11" height="11" fill="#ececec"/><rect x="9" y="11" width="6" height="4.5" fill="#353535"/><path d="M10 11 V9.5 Q12 7 14 9.5 V11" stroke="#353535" stroke-width="1.2" fill="none"/></svg>
<svg class="a" style="left:1889px;top:779px;" width="18" height="18" viewBox="0 0 18 18"><rect x="1" y="1" width="10" height="10" fill="#ececec"/><rect x="5" y="5" width="12" height="12" fill="#353535"/><rect x="6" y="6" width="11" height="11" fill="#ececec"/><rect x="9" y="11" width="6" height="4.5" fill="#353535"/><path d="M13 11 V9.5 Q15 7 17 9.5" stroke="#353535" stroke-width="1.2" fill="none"/></svg>
<div class="a" style="left:1880px;top:812px;width:35px;height:1px;background:#2f2f2f;"></div>
<svg class="a" style="left:1889px;top:827px;" width="18" height="18" viewBox="0 0 18 18"><rect x="1" y="1" width="3" height="3" fill="#1aa01a"/><rect x="14" y="1" width="3" height="3" fill="#1aa01a"/><rect x="1" y="14" width="3" height="3" fill="#1aa01a"/><rect x="14" y="14" width="3" height="3" fill="#1aa01a"/><path d="M7 15 L14 8 V15Z" fill="#ececec"/><circle cx="7" cy="8" r="3.8" fill="#ececec"/></svg>
<svg class="a" style="left:1889px;top:863px;" width="18" height="18" viewBox="0 0 18 18"><rect x="1" y="1" width="2" height="2" fill="#fff"/><rect x="9" y="1" width="2" height="2" fill="#fff"/><rect x="13" y="4" width="2" height="2" fill="#fff"/><rect x="1" y="10" width="2" height="2" fill="#fff"/><rect x="5" y="13" width="2" height="2" fill="#fff"/><rect x="13" y="13" width="2" height="2" fill="#fff"/><path d="M6 12 L13 6 V12Z" fill="#888"/><circle cx="6" cy="6.5" r="3.8" fill="#ececec"/></svg>
<div class="a" style="left:1880px;top:895px;width:35px;height:1px;background:#2f2f2f;"></div>
<svg class="a" style="left:1894px;top:915px;" width="8" height="13" viewBox="0 0 8 13"><path d="M0.5 0 V12.5 L7.5 6.25Z" fill="#ececec"/></svg>
<div class="btnb" style="left:1px;top:101.5px;width:31px;height:31px;background:linear-gradient(#21508c,#27476e)"></div>
<svg class="a" style="left:0px;top:100px;" width="32" height="32" viewBox="0 0 32 32"><path d="M11.6 11.2 L22 16.9 L17.6 18.3 L19.6 21.6 L17.3 23.4 L15 19.8 L11.6 22.6 Z" fill="none" stroke="#ececec" stroke-width="1.9" stroke-linejoin="round"/></svg>
<svg class="a" style="left:7px;top:141px;" width="18" height="18" viewBox="0 0 18 18"><rect x="3.5" y="1.5" width="5.5" height="5.5" fill="#333" stroke="#ececec" stroke-width="1.8"/><path d="M2 14 Q3 4 14 1" stroke="#b0b0b0" stroke-width="0.9" fill="none"/><path d="M11 8.5 L15.5 11.5 L11 14.5Z" fill="#ececec"/></svg>
<svg class="a" style="left:7px;top:173px;" width="18" height="18" viewBox="0 0 18 18"><circle cx="6.4" cy="5.3" r="4.3" fill="none" stroke="#ececec" stroke-width="1.9"/><rect x="7.3" y="6.9" width="7.8" height="7.8" fill="none" stroke="#ececec" stroke-width="1.9"/></svg>
<div class="a" style="left:0px;top:197px;width:32px;height:1px;background:#303030;"></div>
<svg class="a" style="left:7px;top:206px;" width="18" height="18" viewBox="0 0 18 18"><rect x="2.7" y="1.7" width="12.6" height="12.6" rx="1" fill="#e8168a" stroke="#ececec" stroke-width="1.5"/></svg>
<svg class="a" style="left:7px;top:238px;" width="18" height="18" viewBox="0 0 18 18"><circle cx="9" cy="8" r="6.6" fill="#c0267a" stroke="#ececec" stroke-width="1.5"/></svg>
<svg class="a" style="left:0px;top:264px;" width="32" height="32" viewBox="0 0 32 32"><path d="M13.5 7.6 L17.4 10.6 L15.6 17.8 L10.4 17.8 L8.3 11.4 Z" fill="#a0206a" stroke="#ececec" stroke-width="1.4" stroke-linejoin="round"/><path d="M18.60 10.00 L20.30 13.25 L23.93 13.87 L21.36 16.50 L21.89 20.13 L18.60 18.50 L15.31 20.13 L15.84 16.50 L13.27 13.87 L16.90 13.25Z" fill="#ececec" stroke="#ececec" stroke-width="0.8" stroke-linejoin="round"/><path d="M18.60 13.20 L19.36 14.75 L21.07 15.00 L19.84 16.20 L20.13 17.90 L18.60 17.10 L17.07 17.90 L17.36 16.20 L16.13 15.00 L17.84 14.75Z" fill="#6a2050"/></svg>
<svg class="a" style="left:7px;top:302px;" width="18" height="18" viewBox="0 0 18 18"><path d="M9 1 L16 4.5 V12 L9 16 L2 12 V4.5 Z" fill="#ececec"/><path d="M9 2.7 L14.3 5.3 L9 8 L3.7 5.3Z" fill="#6a2a55"/><path d="M3.3 6.5 L8.3 9 V14.3 L3.3 11.5Z" fill="#e8168a"/><path d="M9.7 9 L14.7 6.5 V11.5 L9.7 14.3Z" fill="#8c2a6a"/></svg>
<svg class="a" style="left:7px;top:334px;" width="18" height="18" viewBox="0 0 18 18"><path d="M9 9 Q9 7 10.5 7.5 Q12.5 8.5 11.5 11 Q10 13.5 7 12.5 Q3.5 11 4.5 7 Q6 3 10.5 3.5 Q15.5 4.5 15.5 9.5 Q15.5 14 12 15.5" fill="none" stroke="#ececec" stroke-width="1.8"/></svg>
<div class="a" style="left:0px;top:358px;width:32px;height:1px;background:#303030;"></div>
<svg class="a" style="left:8px;top:366px;" width="18" height="18" viewBox="0 0 18 18"><circle cx="2.5" cy="2.5" r="1.8" fill="#1a9a1a"/><path d="M2.5 3 V12" stroke="#1a9a1a" stroke-width="1.2"/><rect x="0.5" y="10" width="4" height="4" fill="#1a9a1a"/><path d="M4 9 Q6 3 12 2.5" stroke="#999" stroke-width="0.8" fill="none"/><path d="M6 15.5 L8 10 L12.5 6 L16 9.5 L12 14 Z" fill="none" stroke="#ececec" stroke-width="1.5"/><path d="M6 15.5 L10 11.5" stroke="#ececec" stroke-width="1"/></svg>
<svg class="a" style="left:8px;top:399px;" width="18" height="18" viewBox="0 0 18 18"><path d="M2.5 9 Q0 6 3 4.5 Q6 3 5 1" stroke="#1a9a1a" stroke-width="1.5" fill="none"/><path d="M4 13 L13 4 L16 7 L7 16 Z" fill="#ececec"/><path d="M2 17 L4 13 L7 16 Z" fill="#1a9a1a"/></svg>
<svg class="a" style="left:8px;top:431px;" width="18" height="18" viewBox="0 0 18 18"><path d="M4 7 Q1 5 3 3 Q5 1 4 0.5" stroke="#1a9a1a" stroke-width="1.5" fill="none"/><path d="M7 12 L15.5 2.5 L16.5 3.5 L8.5 13.5 Z" fill="#ececec"/><path d="M1 16 Q2 12 6 11 L8 13 Q6 16 1 16Z" fill="#1a9a1a"/></svg>
<svg class="a" style="left:8px;top:461px;" width="18" height="18" viewBox="0 0 18 18"><path d="M1 16 L5.5 3 H8.5 L13 16 H10 L9 13 H5 L4 16 Z M5.8 10.5 H8.2 L7 6.5Z" fill="#ececec"/><rect x="15" y="1" width="2" height="16" fill="#1a9a1a"/></svg>
<div class="a" style="left:0px;top:488px;width:32px;height:1px;background:#303030;"></div>
<svg class="a" style="left:8px;top:495px;" width="18" height="18" viewBox="0 0 18 18"><defs><linearGradient id="lg1" x1="0" y1="0" x2="1" y2="1"><stop offset="0" stop-color="#1e90e0"/><stop offset="0.6" stop-color="#5ab8f0"/><stop offset="1" stop-color="#f0f0f0"/></linearGradient></defs><rect x="1" y="1" width="15" height="15" fill="url(#lg1)" stroke="#ececec" stroke-width="1.4"/></svg>
<svg class="a" style="left:8px;top:527px;" width="18" height="18" viewBox="0 0 18 18"><defs><radialGradient id="rg1"><stop offset="0" stop-color="#1e9be8"/><stop offset="1" stop-color="#0a3a5a"/></radialGradient></defs><rect x="1" y="1" width="15" height="15" fill="url(#rg1)" stroke="#ececec" stroke-width="1.4"/><path d="M8.5 8.5 Q5 3 10 2 M8.5 8.5 Q14 5 15 10 M8.5 8.5 Q12 14 7 15 M8.5 8.5 Q3 12 2 7" stroke="#ececec" stroke-width="1.2" fill="none"/></svg>
<svg class="a" style="left:0px;top:552px;" width="32" height="64" viewBox="0 0 32 64"><path d="M11.5 8.8 Q8.8 12.5 8.8 14.5 Q8.8 16.8 11.4 16.8 Q14.1 16.8 14.1 14.5 Q14.1 12.5 11.5 8.8Z" fill="#1e9be8"/><path d="M12 22.5 Q11 21.5 12 20.5 L17.5 15 L19.5 17 L14 22.5 Q13 23.5 12 22.5Z" fill="none" stroke="#ececec" stroke-width="1.3"/><path d="M16.5 13.5 L20.5 17.5 L21.5 16.5 L20.5 15.5 L22.8 13.2 Q24 11.5 22.8 10.5 Q21.5 9.3 20 10.5 L17.8 12.8 L17 12 Z" fill="#ececec"/></svg>
<svg class="a" style="left:0px;top:552px;" width="32" height="64" viewBox="0 0 32 64"><path d="M19.8 40.5 L12.8 47 L18.3 52.2 L23.3 46.8 Z" fill="none" stroke="#ececec" stroke-width="1.5" stroke-linejoin="round"/><path d="M13.5 47 H23 L18.3 52 Z" fill="#ececec"/><path d="M11.5 48.8 Q8.8 52.5 8.8 54.5 Q8.8 56.8 11.4 56.8 Q14.1 56.8 14.1 54.5 Q14.1 52.5 11.5 48.8Z" fill="#1e9be8"/></svg>
<div class="a" style="left:0px;top:618px;width:32px;height:1px;background:#303030;"></div>
<svg class="a" style="left:8px;top:626px;" width="18" height="18" viewBox="0 0 18 18"><path d="M1 14 V9 H6 Q5 3 10 2 Q14 1.5 14.5 5 Q12 3.5 11 5.5 Q10 8 13.5 9 H15 V14 Z" fill="#ececec"/></svg>
<svg class="a" style="left:8px;top:657px;" width="18" height="18" viewBox="0 0 18 18"><circle cx="2" cy="3" r="0.9" fill="#aaa"/><circle cx="4.5" cy="1.5" r="0.9" fill="#aaa"/><circle cx="2.5" cy="6" r="0.9" fill="#aaa"/><circle cx="5.5" cy="4.5" r="0.9" fill="#aaa"/><rect x="10" y="1" width="3" height="2.5" fill="#ececec"/><path d="M8.5 5 H14.5 L15 7 V15 H7.5 V7Z" fill="#ececec"/></svg>
<svg class="a" style="left:8px;top:689px;" width="18" height="18" viewBox="0 0 18 18"><path d="M9 8 L14 2 L18 6 L12.5 11Z" fill="#ececec"/><path d="M6 11 L9 8 L12.5 11 L9.5 14Z" fill="#888"/><rect x="1" y="13.5" width="3" height="2" fill="#ececec"/><rect x="9" y="13.5" width="7" height="2" fill="#ececec"/></svg>
<svg class="a" style="left:8px;top:722px;" width="18" height="18" viewBox="0 0 18 18"><path d="M1 3 Q4 1 7 5 Q9 9 11 11" stroke="#ececec" stroke-width="2" fill="none"/><path d="M8 11 L14.5 15.5 L13 8Z" fill="#ececec"/></svg>
<div class="a" style="left:0px;top:748px;width:32px;height:1px;background:#303030;"></div>
<svg class="a" style="left:10px;top:754px;" width="18" height="18" viewBox="0 0 18 18"><path d="M2 1 H11 L13 3 V16 H2Z" fill="none" stroke="#ececec" stroke-width="1.8"/><path d="M3 4 H6 M3 6.5 H5 M3 9 H6 M3 11.5 H5" stroke="#ececec" stroke-width="1"/></svg>
<svg class="a" style="left:8px;top:786px;" width="18" height="18" viewBox="0 0 18 18"><circle cx="7" cy="7" r="5.5" fill="none" stroke="#ececec" stroke-width="1.8"/><path d="M11 11 L15 15" stroke="#ececec" stroke-width="2.2"/></svg>
<svg class="a" style="left:7px;top:818px;" width="18" height="18" viewBox="0 0 18 18"><path d="M4.5 3 V1.5 H11 L14 4.5 V12 H11.5" fill="none" stroke="#ececec" stroke-width="1.6"/><path d="M1.5 5 H8.5 L11 7.5 V15.5 H1.5Z" fill="none" stroke="#ececec" stroke-width="1.8"/></svg>
</body></html>
